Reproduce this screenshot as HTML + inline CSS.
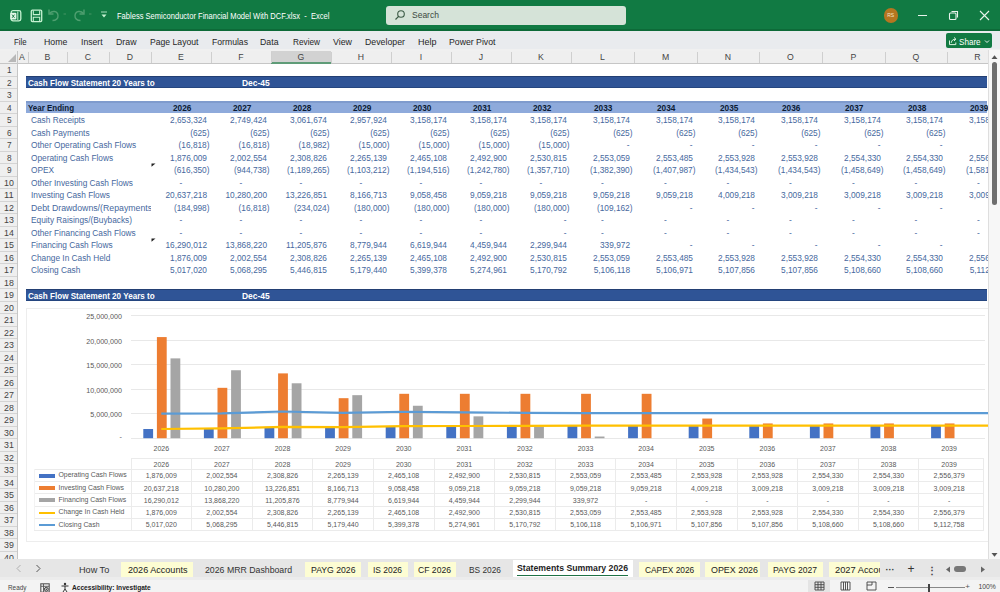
<!DOCTYPE html><html><head><meta charset="utf-8"><style>
html,body{margin:0;padding:0;width:1000px;height:592px;overflow:hidden;background:#fff;position:relative;font-family:"Liberation Sans",sans-serif}
.t{position:absolute;white-space:pre}.tc{text-align:center}.r{position:absolute}svg{position:absolute}
</style></head><body>
<div class="r" style="left:0.00px;top:0.00px;width:1000.00px;height:31.00px;background:#117a43;"></div>
<div class="r" style="left:0.00px;top:29.20px;width:1000.00px;height:1.60px;background:#0d6a38;"></div>
<svg style="left:9px;top:9px" width="14" height="14" viewBox="0 0 14 14"><rect x="2.2" y="1.6" width="9.6" height="10.2" rx="1.8" fill="none" stroke="#c6f2d2" stroke-width="1.3"/><line x1="8.8" y1="2.5" x2="8.8" y2="11" stroke="#c6f2d2" stroke-width="1"/><rect x="1.2" y="3.8" width="6.2" height="6.8" rx="1" fill="#e2f8e8"/><path d="M3.1 5.6 L5.5 8.8 M5.5 5.6 L3.1 8.8" stroke="#1b7a45" stroke-width="1"/></svg>
<svg style="left:30px;top:8.5px" width="13" height="14" viewBox="0 0 13 14"><rect x="1.3" y="1.2" width="10.4" height="11.4" rx="1" fill="none" stroke="#c6f2d2" stroke-width="1.3"/><path d="M3.3 1.5 V5.6 H9.7 V1.5" fill="none" stroke="#c6f2d2" stroke-width="1.1"/><path d="M3.3 12.3 V8.3 H9.7 V12.3" fill="none" stroke="#c6f2d2" stroke-width="1.1"/></svg>
<svg style="left:44px;top:4px" width="70" height="24" viewBox="0 0 70 24"><path d="M5 5.5 V10 H9.5" fill="none" stroke="#4f9f70" stroke-width="1.4"/><path d="M5.5 9.5 C8 6.5 13.5 6.5 14 11.5 C14.3 14.5 12 16.5 8.5 16.5" fill="none" stroke="#4f9f70" stroke-width="1.4"/><line x1="19.5" y1="10" x2="22" y2="10" stroke="#3f8f60" stroke-width="1.2"/><path d="M40 5.5 V10 H35.5" fill="none" stroke="#4f9f70" stroke-width="1.4"/><path d="M39.5 9.5 C37 6.5 31.5 6.5 31 11.5 C30.7 14.5 33 16.5 36.5 16.5" fill="none" stroke="#4f9f70" stroke-width="1.4"/><line x1="45" y1="10" x2="47.5" y2="10" stroke="#3f8f60" stroke-width="1.2"/><line x1="57" y1="8" x2="63" y2="8" stroke="#a8dcbc" stroke-width="1"/><path d="M57.5 10.5 H62.5 L60 13.5 Z" fill="#c6f2d2"/></svg>
<svg style="left:115.40px;top:7.20px;overflow:visible" width="216.40" height="17.60"><text x="2" y="11.70" font-family="Liberation Sans" font-size="8.8" font-weight="normal" fill="#fff" textLength="212.40" lengthAdjust="spacingAndGlyphs">Fabless Semiconductor Financial Model With DCF.xlsx &#160;-&#160; Excel</text></svg>
<div class="r" style="left:385.50px;top:5.50px;width:240.00px;height:19.50px;background:#d5e3d8;border-radius:3px"></div>
<svg style="left:394px;top:9px" width="12" height="12" viewBox="0 0 12 12"><circle cx="7" cy="5" r="3.3" fill="none" stroke="#3b5a45" stroke-width="1.1"/><line x1="4.6" y1="7.4" x2="1.5" y2="10.5" stroke="#3b5a45" stroke-width="1.2"/></svg>
<div class="t" style="left:412.00px;top:9.78px;font-size:8.5px;line-height:11.05px;color:#3b4a40;font-weight:normal;">Search</div>
<div class="r" style="left:883.5px;top:8px;width:14.5px;height:14.5px;border-radius:50%;background:#b57620"></div>
<div class="t tc" style="left:790.70px;width:200px;top:12.05px;font-size:5px;line-height:6.50px;color:#f5e6c8;font-weight:normal;">RS</div>
<div class="r" style="left:918.00px;top:14.50px;width:9.00px;height:1.20px;background:#e8f3ec;"></div>
<svg style="left:948px;top:10px" width="11" height="11" viewBox="0 0 11 11"><rect x="1.5" y="3" width="6.5" height="6.5" rx="1" fill="none" stroke="#e8f3ec" stroke-width="1.1"/><path d="M3.5 1.5 H9.5 V7.5" fill="none" stroke="#e8f3ec" stroke-width="1.1"/></svg>
<svg style="left:979px;top:10px" width="11" height="11" viewBox="0 0 11 11"><path d="M1 1 L10 10 M10 1 L1 10" stroke="#e8f3ec" stroke-width="1.1"/></svg>
<div class="r" style="left:0.00px;top:31.00px;width:1000.00px;height:18.00px;background:#e9ebee;"></div>
<svg style="left:11.80px;top:32.70px;overflow:visible" width="16.60" height="18.60"><text x="2" y="12.37" font-family="Liberation Sans" font-size="9.3" font-weight="normal" fill="#262626" textLength="12.60" lengthAdjust="spacingAndGlyphs">File</text></svg>
<svg style="left:42.40px;top:32.70px;overflow:visible" width="27.40" height="18.60"><text x="2" y="12.37" font-family="Liberation Sans" font-size="9.3" font-weight="normal" fill="#262626" textLength="23.40" lengthAdjust="spacingAndGlyphs">Home</text></svg>
<svg style="left:79.00px;top:32.70px;overflow:visible" width="25.60" height="18.60"><text x="2" y="12.37" font-family="Liberation Sans" font-size="9.3" font-weight="normal" fill="#262626" textLength="21.60" lengthAdjust="spacingAndGlyphs">Insert</text></svg>
<svg style="left:114.00px;top:32.70px;overflow:visible" width="24.50" height="18.60"><text x="2" y="12.37" font-family="Liberation Sans" font-size="9.3" font-weight="normal" fill="#262626" textLength="20.50" lengthAdjust="spacingAndGlyphs">Draw</text></svg>
<svg style="left:147.50px;top:32.70px;overflow:visible" width="52.50" height="18.60"><text x="2" y="12.37" font-family="Liberation Sans" font-size="9.3" font-weight="normal" fill="#262626" textLength="48.50" lengthAdjust="spacingAndGlyphs">Page Layout</text></svg>
<svg style="left:209.50px;top:32.70px;overflow:visible" width="40.00" height="18.60"><text x="2" y="12.37" font-family="Liberation Sans" font-size="9.3" font-weight="normal" fill="#262626" textLength="36.00" lengthAdjust="spacingAndGlyphs">Formulas</text></svg>
<svg style="left:258.00px;top:32.70px;overflow:visible" width="22.50" height="18.60"><text x="2" y="12.37" font-family="Liberation Sans" font-size="9.3" font-weight="normal" fill="#262626" textLength="18.50" lengthAdjust="spacingAndGlyphs">Data</text></svg>
<svg style="left:290.50px;top:32.70px;overflow:visible" width="31.00" height="18.60"><text x="2" y="12.37" font-family="Liberation Sans" font-size="9.3" font-weight="normal" fill="#262626" textLength="27.00" lengthAdjust="spacingAndGlyphs">Review</text></svg>
<svg style="left:331.00px;top:32.70px;overflow:visible" width="23.00" height="18.60"><text x="2" y="12.37" font-family="Liberation Sans" font-size="9.3" font-weight="normal" fill="#262626" textLength="19.00" lengthAdjust="spacingAndGlyphs">View</text></svg>
<svg style="left:363.00px;top:32.70px;overflow:visible" width="44.00" height="18.60"><text x="2" y="12.37" font-family="Liberation Sans" font-size="9.3" font-weight="normal" fill="#262626" textLength="40.00" lengthAdjust="spacingAndGlyphs">Developer</text></svg>
<svg style="left:415.50px;top:32.70px;overflow:visible" width="22.50" height="18.60"><text x="2" y="12.37" font-family="Liberation Sans" font-size="9.3" font-weight="normal" fill="#262626" textLength="18.50" lengthAdjust="spacingAndGlyphs">Help</text></svg>
<svg style="left:447.00px;top:32.70px;overflow:visible" width="50.50" height="18.60"><text x="2" y="12.37" font-family="Liberation Sans" font-size="9.3" font-weight="normal" fill="#262626" textLength="46.50" lengthAdjust="spacingAndGlyphs">Power Pivot</text></svg>
<div class="r" style="left:946.00px;top:33.30px;width:46.20px;height:15.00px;background:#117a43;border-radius:2px"></div>
<svg style="left:948px;top:36px" width="10" height="10" viewBox="0 0 10 10"><path d="M1.5 4.5 V8.6 H7.8 V6.5" fill="none" stroke="#d8f3e0" stroke-width="1"/><path d="M3.2 6.8 C3.6 4.2 5.2 3.2 7.6 3.2 M6 1.4 L7.9 3.2 L6 5" fill="none" stroke="#d8f3e0" stroke-width="1"/></svg>
<svg style="left:957.40px;top:32.50px;overflow:visible" width="25.60" height="18.00"><text x="2" y="11.97" font-family="Liberation Sans" font-size="9" font-weight="normal" fill="#fff" textLength="21.60" lengthAdjust="spacingAndGlyphs">Share</text></svg>
<svg style="left:984px;top:38.5px" width="6" height="5" viewBox="0 0 6 5"><path d="M1 1.5 L3 3.5 L5 1.5" fill="none" stroke="#fff" stroke-width="0.9"/></svg>
<div class="r" style="left:0.00px;top:49.00px;width:1000.00px;height:15.00px;background:#f0f0f0;"></div>
<div class="r" style="left:0.00px;top:50.50px;width:989.00px;height:13.00px;background:#efefef;"></div>
<div class="r" style="left:0.00px;top:63.00px;width:989.00px;height:1.00px;background:#c6c6c6;"></div>
<div class="r" style="left:271.00px;top:50.50px;width:60.00px;height:13.00px;background:#d2d2d2;"></div>
<div class="r" style="left:271.00px;top:62.00px;width:60.00px;height:1.50px;background:#5f9c78;"></div>
<svg style="left:8px;top:54px" width="8" height="8" viewBox="0 0 8 8"><path d="M8 0 L8 8 L0 8 Z" fill="#b8b8b8"/></svg>
<div class="r" style="left:27.50px;top:52.00px;width:1.00px;height:11.00px;background:#cfcfcf;"></div>
<div class="t tc" style="left:-78.00px;width:200px;top:51.95px;font-size:8.7px;line-height:11.31px;color:#444;font-weight:normal;">A</div>
<div class="r" style="left:66.50px;top:52.00px;width:1.00px;height:11.00px;background:#cfcfcf;"></div>
<div class="t tc" style="left:-52.50px;width:200px;top:51.95px;font-size:8.7px;line-height:11.31px;color:#444;font-weight:normal;">B</div>
<div class="r" style="left:108.50px;top:52.00px;width:1.00px;height:11.00px;background:#cfcfcf;"></div>
<div class="t tc" style="left:-12.00px;width:200px;top:51.95px;font-size:8.7px;line-height:11.31px;color:#444;font-weight:normal;">C</div>
<div class="r" style="left:150.50px;top:52.00px;width:1.00px;height:11.00px;background:#cfcfcf;"></div>
<div class="t tc" style="left:30.00px;width:200px;top:51.95px;font-size:8.7px;line-height:11.31px;color:#444;font-weight:normal;">D</div>
<div class="r" style="left:210.50px;top:52.00px;width:1.00px;height:11.00px;background:#cfcfcf;"></div>
<div class="t tc" style="left:81.00px;width:200px;top:51.95px;font-size:8.7px;line-height:11.31px;color:#444;font-weight:normal;">E</div>
<div class="r" style="left:270.50px;top:52.00px;width:1.00px;height:11.00px;background:#cfcfcf;"></div>
<div class="t tc" style="left:141.00px;width:200px;top:51.95px;font-size:8.7px;line-height:11.31px;color:#444;font-weight:normal;">F</div>
<div class="r" style="left:330.50px;top:52.00px;width:1.00px;height:11.00px;background:#cfcfcf;"></div>
<div class="t tc" style="left:201.00px;width:200px;top:51.95px;font-size:8.7px;line-height:11.31px;color:#444;font-weight:normal;">G</div>
<div class="r" style="left:390.50px;top:52.00px;width:1.00px;height:11.00px;background:#cfcfcf;"></div>
<div class="t tc" style="left:261.00px;width:200px;top:51.95px;font-size:8.7px;line-height:11.31px;color:#444;font-weight:normal;">H</div>
<div class="r" style="left:450.50px;top:52.00px;width:1.00px;height:11.00px;background:#cfcfcf;"></div>
<div class="t tc" style="left:321.00px;width:200px;top:51.95px;font-size:8.7px;line-height:11.31px;color:#444;font-weight:normal;">I</div>
<div class="r" style="left:510.50px;top:52.00px;width:1.00px;height:11.00px;background:#cfcfcf;"></div>
<div class="t tc" style="left:381.00px;width:200px;top:51.95px;font-size:8.7px;line-height:11.31px;color:#444;font-weight:normal;">J</div>
<div class="r" style="left:570.50px;top:52.00px;width:1.00px;height:11.00px;background:#cfcfcf;"></div>
<div class="t tc" style="left:441.00px;width:200px;top:51.95px;font-size:8.7px;line-height:11.31px;color:#444;font-weight:normal;">K</div>
<div class="r" style="left:633.50px;top:52.00px;width:1.00px;height:11.00px;background:#cfcfcf;"></div>
<div class="t tc" style="left:502.50px;width:200px;top:51.95px;font-size:8.7px;line-height:11.31px;color:#444;font-weight:normal;">L</div>
<div class="r" style="left:696.50px;top:52.00px;width:1.00px;height:11.00px;background:#cfcfcf;"></div>
<div class="t tc" style="left:565.50px;width:200px;top:51.95px;font-size:8.7px;line-height:11.31px;color:#444;font-weight:normal;">M</div>
<div class="r" style="left:758.50px;top:52.00px;width:1.00px;height:11.00px;background:#cfcfcf;"></div>
<div class="t tc" style="left:628.00px;width:200px;top:51.95px;font-size:8.7px;line-height:11.31px;color:#444;font-weight:normal;">N</div>
<div class="r" style="left:821.50px;top:52.00px;width:1.00px;height:11.00px;background:#cfcfcf;"></div>
<div class="t tc" style="left:690.50px;width:200px;top:51.95px;font-size:8.7px;line-height:11.31px;color:#444;font-weight:normal;">O</div>
<div class="r" style="left:884.50px;top:52.00px;width:1.00px;height:11.00px;background:#cfcfcf;"></div>
<div class="t tc" style="left:753.50px;width:200px;top:51.95px;font-size:8.7px;line-height:11.31px;color:#444;font-weight:normal;">P</div>
<div class="r" style="left:946.50px;top:52.00px;width:1.00px;height:11.00px;background:#cfcfcf;"></div>
<div class="t tc" style="left:816.00px;width:200px;top:51.95px;font-size:8.7px;line-height:11.31px;color:#444;font-weight:normal;">Q</div>
<div class="r" style="left:1009.50px;top:52.00px;width:1.00px;height:11.00px;background:#cfcfcf;"></div>
<div class="t tc" style="left:877.50px;width:200px;top:51.95px;font-size:8.7px;line-height:11.31px;color:#444;font-weight:normal;">R</div>
<div class="r" style="left:17.00px;top:50.50px;width:1.00px;height:13.00px;background:#c6c6c6;"></div>
<div class="r" style="left:0.00px;top:63.50px;width:17.00px;height:496.00px;background:#efefef;"></div>
<div class="r" style="left:17.00px;top:63.50px;width:1.00px;height:496.00px;background:#c6c6c6;"></div>
<div class="r" style="left:0.00px;top:75.50px;width:17.00px;height:1.00px;background:#d4d4d4;"></div>
<svg style="left:4.70px;top:60.45px;overflow:visible" width="8.60" height="19.20"><text x="2" y="12.77" font-family="Liberation Sans" font-size="9.6" font-weight="normal" fill="#444" textLength="4.60" lengthAdjust="spacingAndGlyphs">1</text></svg>
<div class="r" style="left:0.00px;top:88.00px;width:17.00px;height:1.00px;background:#d4d4d4;"></div>
<svg style="left:4.70px;top:72.95px;overflow:visible" width="8.60" height="19.20"><text x="2" y="12.77" font-family="Liberation Sans" font-size="9.6" font-weight="normal" fill="#444" textLength="4.60" lengthAdjust="spacingAndGlyphs">2</text></svg>
<div class="r" style="left:0.00px;top:100.50px;width:17.00px;height:1.00px;background:#d4d4d4;"></div>
<svg style="left:4.70px;top:85.45px;overflow:visible" width="8.60" height="19.20"><text x="2" y="12.77" font-family="Liberation Sans" font-size="9.6" font-weight="normal" fill="#444" textLength="4.60" lengthAdjust="spacingAndGlyphs">3</text></svg>
<div class="r" style="left:0.00px;top:113.00px;width:17.00px;height:1.00px;background:#d4d4d4;"></div>
<svg style="left:4.70px;top:97.95px;overflow:visible" width="8.60" height="19.20"><text x="2" y="12.77" font-family="Liberation Sans" font-size="9.6" font-weight="normal" fill="#444" textLength="4.60" lengthAdjust="spacingAndGlyphs">4</text></svg>
<div class="r" style="left:0.00px;top:125.50px;width:17.00px;height:1.00px;background:#d4d4d4;"></div>
<svg style="left:4.70px;top:110.45px;overflow:visible" width="8.60" height="19.20"><text x="2" y="12.77" font-family="Liberation Sans" font-size="9.6" font-weight="normal" fill="#444" textLength="4.60" lengthAdjust="spacingAndGlyphs">5</text></svg>
<div class="r" style="left:0.00px;top:138.00px;width:17.00px;height:1.00px;background:#d4d4d4;"></div>
<svg style="left:4.70px;top:122.95px;overflow:visible" width="8.60" height="19.20"><text x="2" y="12.77" font-family="Liberation Sans" font-size="9.6" font-weight="normal" fill="#444" textLength="4.60" lengthAdjust="spacingAndGlyphs">6</text></svg>
<div class="r" style="left:0.00px;top:150.50px;width:17.00px;height:1.00px;background:#d4d4d4;"></div>
<svg style="left:4.70px;top:135.45px;overflow:visible" width="8.60" height="19.20"><text x="2" y="12.77" font-family="Liberation Sans" font-size="9.6" font-weight="normal" fill="#444" textLength="4.60" lengthAdjust="spacingAndGlyphs">7</text></svg>
<div class="r" style="left:0.00px;top:163.00px;width:17.00px;height:1.00px;background:#d4d4d4;"></div>
<svg style="left:4.70px;top:147.95px;overflow:visible" width="8.60" height="19.20"><text x="2" y="12.77" font-family="Liberation Sans" font-size="9.6" font-weight="normal" fill="#444" textLength="4.60" lengthAdjust="spacingAndGlyphs">8</text></svg>
<div class="r" style="left:0.00px;top:175.50px;width:17.00px;height:1.00px;background:#d4d4d4;"></div>
<svg style="left:4.70px;top:160.45px;overflow:visible" width="8.60" height="19.20"><text x="2" y="12.77" font-family="Liberation Sans" font-size="9.6" font-weight="normal" fill="#444" textLength="4.60" lengthAdjust="spacingAndGlyphs">9</text></svg>
<div class="r" style="left:0.00px;top:188.00px;width:17.00px;height:1.00px;background:#d4d4d4;"></div>
<svg style="left:2.10px;top:172.95px;overflow:visible" width="13.80" height="19.20"><text x="2" y="12.77" font-family="Liberation Sans" font-size="9.6" font-weight="normal" fill="#444" textLength="9.80" lengthAdjust="spacingAndGlyphs">10</text></svg>
<div class="r" style="left:0.00px;top:200.50px;width:17.00px;height:1.00px;background:#d4d4d4;"></div>
<svg style="left:2.10px;top:185.45px;overflow:visible" width="13.80" height="19.20"><text x="2" y="12.77" font-family="Liberation Sans" font-size="9.6" font-weight="normal" fill="#444" textLength="9.80" lengthAdjust="spacingAndGlyphs">11</text></svg>
<div class="r" style="left:0.00px;top:213.00px;width:17.00px;height:1.00px;background:#d4d4d4;"></div>
<svg style="left:2.10px;top:197.95px;overflow:visible" width="13.80" height="19.20"><text x="2" y="12.77" font-family="Liberation Sans" font-size="9.6" font-weight="normal" fill="#444" textLength="9.80" lengthAdjust="spacingAndGlyphs">12</text></svg>
<div class="r" style="left:0.00px;top:225.50px;width:17.00px;height:1.00px;background:#d4d4d4;"></div>
<svg style="left:2.10px;top:210.45px;overflow:visible" width="13.80" height="19.20"><text x="2" y="12.77" font-family="Liberation Sans" font-size="9.6" font-weight="normal" fill="#444" textLength="9.80" lengthAdjust="spacingAndGlyphs">13</text></svg>
<div class="r" style="left:0.00px;top:238.00px;width:17.00px;height:1.00px;background:#d4d4d4;"></div>
<svg style="left:2.10px;top:222.95px;overflow:visible" width="13.80" height="19.20"><text x="2" y="12.77" font-family="Liberation Sans" font-size="9.6" font-weight="normal" fill="#444" textLength="9.80" lengthAdjust="spacingAndGlyphs">14</text></svg>
<div class="r" style="left:0.00px;top:250.50px;width:17.00px;height:1.00px;background:#d4d4d4;"></div>
<svg style="left:2.10px;top:235.45px;overflow:visible" width="13.80" height="19.20"><text x="2" y="12.77" font-family="Liberation Sans" font-size="9.6" font-weight="normal" fill="#444" textLength="9.80" lengthAdjust="spacingAndGlyphs">15</text></svg>
<div class="r" style="left:0.00px;top:263.00px;width:17.00px;height:1.00px;background:#d4d4d4;"></div>
<svg style="left:2.10px;top:247.95px;overflow:visible" width="13.80" height="19.20"><text x="2" y="12.77" font-family="Liberation Sans" font-size="9.6" font-weight="normal" fill="#444" textLength="9.80" lengthAdjust="spacingAndGlyphs">16</text></svg>
<div class="r" style="left:0.00px;top:275.50px;width:17.00px;height:1.00px;background:#d4d4d4;"></div>
<svg style="left:2.10px;top:260.45px;overflow:visible" width="13.80" height="19.20"><text x="2" y="12.77" font-family="Liberation Sans" font-size="9.6" font-weight="normal" fill="#444" textLength="9.80" lengthAdjust="spacingAndGlyphs">17</text></svg>
<div class="r" style="left:0.00px;top:288.00px;width:17.00px;height:1.00px;background:#d4d4d4;"></div>
<svg style="left:2.10px;top:272.95px;overflow:visible" width="13.80" height="19.20"><text x="2" y="12.77" font-family="Liberation Sans" font-size="9.6" font-weight="normal" fill="#444" textLength="9.80" lengthAdjust="spacingAndGlyphs">18</text></svg>
<div class="r" style="left:0.00px;top:300.50px;width:17.00px;height:1.00px;background:#d4d4d4;"></div>
<svg style="left:2.10px;top:285.45px;overflow:visible" width="13.80" height="19.20"><text x="2" y="12.77" font-family="Liberation Sans" font-size="9.6" font-weight="normal" fill="#444" textLength="9.80" lengthAdjust="spacingAndGlyphs">19</text></svg>
<div class="r" style="left:0.00px;top:313.00px;width:17.00px;height:1.00px;background:#d4d4d4;"></div>
<svg style="left:2.10px;top:297.95px;overflow:visible" width="13.80" height="19.20"><text x="2" y="12.77" font-family="Liberation Sans" font-size="9.6" font-weight="normal" fill="#444" textLength="9.80" lengthAdjust="spacingAndGlyphs">20</text></svg>
<div class="r" style="left:0.00px;top:325.50px;width:17.00px;height:1.00px;background:#d4d4d4;"></div>
<svg style="left:2.10px;top:310.45px;overflow:visible" width="13.80" height="19.20"><text x="2" y="12.77" font-family="Liberation Sans" font-size="9.6" font-weight="normal" fill="#444" textLength="9.80" lengthAdjust="spacingAndGlyphs">21</text></svg>
<div class="r" style="left:0.00px;top:338.00px;width:17.00px;height:1.00px;background:#d4d4d4;"></div>
<svg style="left:2.10px;top:322.95px;overflow:visible" width="13.80" height="19.20"><text x="2" y="12.77" font-family="Liberation Sans" font-size="9.6" font-weight="normal" fill="#444" textLength="9.80" lengthAdjust="spacingAndGlyphs">22</text></svg>
<div class="r" style="left:0.00px;top:350.50px;width:17.00px;height:1.00px;background:#d4d4d4;"></div>
<svg style="left:2.10px;top:335.45px;overflow:visible" width="13.80" height="19.20"><text x="2" y="12.77" font-family="Liberation Sans" font-size="9.6" font-weight="normal" fill="#444" textLength="9.80" lengthAdjust="spacingAndGlyphs">23</text></svg>
<div class="r" style="left:0.00px;top:363.00px;width:17.00px;height:1.00px;background:#d4d4d4;"></div>
<svg style="left:2.10px;top:347.95px;overflow:visible" width="13.80" height="19.20"><text x="2" y="12.77" font-family="Liberation Sans" font-size="9.6" font-weight="normal" fill="#444" textLength="9.80" lengthAdjust="spacingAndGlyphs">24</text></svg>
<div class="r" style="left:0.00px;top:375.50px;width:17.00px;height:1.00px;background:#d4d4d4;"></div>
<svg style="left:2.10px;top:360.45px;overflow:visible" width="13.80" height="19.20"><text x="2" y="12.77" font-family="Liberation Sans" font-size="9.6" font-weight="normal" fill="#444" textLength="9.80" lengthAdjust="spacingAndGlyphs">25</text></svg>
<div class="r" style="left:0.00px;top:388.00px;width:17.00px;height:1.00px;background:#d4d4d4;"></div>
<svg style="left:2.10px;top:372.95px;overflow:visible" width="13.80" height="19.20"><text x="2" y="12.77" font-family="Liberation Sans" font-size="9.6" font-weight="normal" fill="#444" textLength="9.80" lengthAdjust="spacingAndGlyphs">26</text></svg>
<div class="r" style="left:0.00px;top:400.50px;width:17.00px;height:1.00px;background:#d4d4d4;"></div>
<svg style="left:2.10px;top:385.45px;overflow:visible" width="13.80" height="19.20"><text x="2" y="12.77" font-family="Liberation Sans" font-size="9.6" font-weight="normal" fill="#444" textLength="9.80" lengthAdjust="spacingAndGlyphs">27</text></svg>
<div class="r" style="left:0.00px;top:413.00px;width:17.00px;height:1.00px;background:#d4d4d4;"></div>
<svg style="left:2.10px;top:397.95px;overflow:visible" width="13.80" height="19.20"><text x="2" y="12.77" font-family="Liberation Sans" font-size="9.6" font-weight="normal" fill="#444" textLength="9.80" lengthAdjust="spacingAndGlyphs">28</text></svg>
<div class="r" style="left:0.00px;top:425.50px;width:17.00px;height:1.00px;background:#d4d4d4;"></div>
<svg style="left:2.10px;top:410.45px;overflow:visible" width="13.80" height="19.20"><text x="2" y="12.77" font-family="Liberation Sans" font-size="9.6" font-weight="normal" fill="#444" textLength="9.80" lengthAdjust="spacingAndGlyphs">29</text></svg>
<div class="r" style="left:0.00px;top:438.00px;width:17.00px;height:1.00px;background:#d4d4d4;"></div>
<svg style="left:2.10px;top:422.95px;overflow:visible" width="13.80" height="19.20"><text x="2" y="12.77" font-family="Liberation Sans" font-size="9.6" font-weight="normal" fill="#444" textLength="9.80" lengthAdjust="spacingAndGlyphs">30</text></svg>
<div class="r" style="left:0.00px;top:450.50px;width:17.00px;height:1.00px;background:#d4d4d4;"></div>
<svg style="left:2.10px;top:435.45px;overflow:visible" width="13.80" height="19.20"><text x="2" y="12.77" font-family="Liberation Sans" font-size="9.6" font-weight="normal" fill="#444" textLength="9.80" lengthAdjust="spacingAndGlyphs">31</text></svg>
<div class="r" style="left:0.00px;top:463.00px;width:17.00px;height:1.00px;background:#d4d4d4;"></div>
<svg style="left:2.10px;top:447.95px;overflow:visible" width="13.80" height="19.20"><text x="2" y="12.77" font-family="Liberation Sans" font-size="9.6" font-weight="normal" fill="#444" textLength="9.80" lengthAdjust="spacingAndGlyphs">32</text></svg>
<div class="r" style="left:0.00px;top:475.50px;width:17.00px;height:1.00px;background:#d4d4d4;"></div>
<svg style="left:2.10px;top:460.45px;overflow:visible" width="13.80" height="19.20"><text x="2" y="12.77" font-family="Liberation Sans" font-size="9.6" font-weight="normal" fill="#444" textLength="9.80" lengthAdjust="spacingAndGlyphs">33</text></svg>
<div class="r" style="left:0.00px;top:488.00px;width:17.00px;height:1.00px;background:#d4d4d4;"></div>
<svg style="left:2.10px;top:472.95px;overflow:visible" width="13.80" height="19.20"><text x="2" y="12.77" font-family="Liberation Sans" font-size="9.6" font-weight="normal" fill="#444" textLength="9.80" lengthAdjust="spacingAndGlyphs">34</text></svg>
<div class="r" style="left:0.00px;top:500.50px;width:17.00px;height:1.00px;background:#d4d4d4;"></div>
<svg style="left:2.10px;top:485.45px;overflow:visible" width="13.80" height="19.20"><text x="2" y="12.77" font-family="Liberation Sans" font-size="9.6" font-weight="normal" fill="#444" textLength="9.80" lengthAdjust="spacingAndGlyphs">35</text></svg>
<div class="r" style="left:0.00px;top:513.00px;width:17.00px;height:1.00px;background:#d4d4d4;"></div>
<svg style="left:2.10px;top:497.95px;overflow:visible" width="13.80" height="19.20"><text x="2" y="12.77" font-family="Liberation Sans" font-size="9.6" font-weight="normal" fill="#444" textLength="9.80" lengthAdjust="spacingAndGlyphs">36</text></svg>
<div class="r" style="left:0.00px;top:525.50px;width:17.00px;height:1.00px;background:#d4d4d4;"></div>
<svg style="left:2.10px;top:510.45px;overflow:visible" width="13.80" height="19.20"><text x="2" y="12.77" font-family="Liberation Sans" font-size="9.6" font-weight="normal" fill="#444" textLength="9.80" lengthAdjust="spacingAndGlyphs">37</text></svg>
<div class="r" style="left:0.00px;top:538.00px;width:17.00px;height:1.00px;background:#d4d4d4;"></div>
<svg style="left:2.10px;top:522.95px;overflow:visible" width="13.80" height="19.20"><text x="2" y="12.77" font-family="Liberation Sans" font-size="9.6" font-weight="normal" fill="#444" textLength="9.80" lengthAdjust="spacingAndGlyphs">38</text></svg>
<div class="r" style="left:0.00px;top:550.50px;width:17.00px;height:1.00px;background:#d4d4d4;"></div>
<svg style="left:2.10px;top:535.45px;overflow:visible" width="13.80" height="19.20"><text x="2" y="12.77" font-family="Liberation Sans" font-size="9.6" font-weight="normal" fill="#444" textLength="9.80" lengthAdjust="spacingAndGlyphs">39</text></svg>
<div class="r" style="left:0.00px;top:563.00px;width:17.00px;height:1.00px;background:#d4d4d4;"></div>
<svg style="left:2.10px;top:547.95px;overflow:visible" width="13.80" height="19.20"><text x="2" y="12.77" font-family="Liberation Sans" font-size="9.6" font-weight="normal" fill="#444" textLength="9.80" lengthAdjust="spacingAndGlyphs">40</text></svg>
<div class="r" style="left:26.00px;top:76.10px;width:961.00px;height:12.20px;background:#2f5496;"></div>
<div class="r" style="left:26.00px;top:76.10px;width:961.00px;height:1.40px;background:#233f73;"></div>
<div class="r" style="left:26.00px;top:87.30px;width:961.00px;height:1.00px;background:#25467f;"></div>
<svg style="left:26.30px;top:74.45px;overflow:visible" width="130.70" height="17.40"><text x="2" y="11.57" font-family="Liberation Sans" font-size="8.7" font-weight="bold" fill="#fff" textLength="126.70" lengthAdjust="spacingAndGlyphs">Cash Flow Statement 20 Years to</text></svg>
<svg style="left:239.80px;top:74.45px;overflow:visible" width="31.70" height="17.40"><text x="2" y="11.57" font-family="Liberation Sans" font-size="8.7" font-weight="bold" fill="#fff" textLength="27.70" lengthAdjust="spacingAndGlyphs">Dec-45</text></svg>
<div class="r" style="left:26.00px;top:288.60px;width:961.00px;height:12.20px;background:#2f5496;"></div>
<div class="r" style="left:26.00px;top:288.60px;width:961.00px;height:1.40px;background:#233f73;"></div>
<div class="r" style="left:26.00px;top:299.80px;width:961.00px;height:1.00px;background:#25467f;"></div>
<svg style="left:26.30px;top:286.95px;overflow:visible" width="130.70" height="17.40"><text x="2" y="11.57" font-family="Liberation Sans" font-size="8.7" font-weight="bold" fill="#fff" textLength="126.70" lengthAdjust="spacingAndGlyphs">Cash Flow Statement 20 Years to</text></svg>
<svg style="left:239.80px;top:286.95px;overflow:visible" width="31.70" height="17.40"><text x="2" y="11.57" font-family="Liberation Sans" font-size="8.7" font-weight="bold" fill="#fff" textLength="27.70" lengthAdjust="spacingAndGlyphs">Dec-45</text></svg>
<div class="r" style="left:26.00px;top:100.60px;width:961.00px;height:12.50px;background:#8eaadb;"></div>
<div class="r" style="left:26.00px;top:100.60px;width:961.00px;height:2.00px;background:#7f9bcd;"></div>
<svg style="left:26.00px;top:98.95px;overflow:visible" width="50.00" height="17.40"><text x="2" y="11.57" font-family="Liberation Sans" font-size="8.7" font-weight="bold" fill="#0b1a33" textLength="46.00" lengthAdjust="spacingAndGlyphs">Year Ending</text></svg>
<svg style="left:170.80px;top:98.95px;overflow:visible" width="22.40" height="17.40"><text x="2" y="11.57" font-family="Liberation Sans" font-size="8.7" font-weight="bold" fill="#0b1a33" textLength="18.40" lengthAdjust="spacingAndGlyphs">2026</text></svg>
<svg style="left:230.80px;top:98.95px;overflow:visible" width="22.40" height="17.40"><text x="2" y="11.57" font-family="Liberation Sans" font-size="8.7" font-weight="bold" fill="#0b1a33" textLength="18.40" lengthAdjust="spacingAndGlyphs">2027</text></svg>
<svg style="left:290.80px;top:98.95px;overflow:visible" width="22.40" height="17.40"><text x="2" y="11.57" font-family="Liberation Sans" font-size="8.7" font-weight="bold" fill="#0b1a33" textLength="18.40" lengthAdjust="spacingAndGlyphs">2028</text></svg>
<svg style="left:350.80px;top:98.95px;overflow:visible" width="22.40" height="17.40"><text x="2" y="11.57" font-family="Liberation Sans" font-size="8.7" font-weight="bold" fill="#0b1a33" textLength="18.40" lengthAdjust="spacingAndGlyphs">2029</text></svg>
<svg style="left:410.80px;top:98.95px;overflow:visible" width="22.40" height="17.40"><text x="2" y="11.57" font-family="Liberation Sans" font-size="8.7" font-weight="bold" fill="#0b1a33" textLength="18.40" lengthAdjust="spacingAndGlyphs">2030</text></svg>
<svg style="left:470.80px;top:98.95px;overflow:visible" width="22.40" height="17.40"><text x="2" y="11.57" font-family="Liberation Sans" font-size="8.7" font-weight="bold" fill="#0b1a33" textLength="18.40" lengthAdjust="spacingAndGlyphs">2031</text></svg>
<svg style="left:530.80px;top:98.95px;overflow:visible" width="22.40" height="17.40"><text x="2" y="11.57" font-family="Liberation Sans" font-size="8.7" font-weight="bold" fill="#0b1a33" textLength="18.40" lengthAdjust="spacingAndGlyphs">2032</text></svg>
<svg style="left:592.30px;top:98.95px;overflow:visible" width="22.40" height="17.40"><text x="2" y="11.57" font-family="Liberation Sans" font-size="8.7" font-weight="bold" fill="#0b1a33" textLength="18.40" lengthAdjust="spacingAndGlyphs">2033</text></svg>
<svg style="left:655.30px;top:98.95px;overflow:visible" width="22.40" height="17.40"><text x="2" y="11.57" font-family="Liberation Sans" font-size="8.7" font-weight="bold" fill="#0b1a33" textLength="18.40" lengthAdjust="spacingAndGlyphs">2034</text></svg>
<svg style="left:717.80px;top:98.95px;overflow:visible" width="22.40" height="17.40"><text x="2" y="11.57" font-family="Liberation Sans" font-size="8.7" font-weight="bold" fill="#0b1a33" textLength="18.40" lengthAdjust="spacingAndGlyphs">2035</text></svg>
<svg style="left:780.30px;top:98.95px;overflow:visible" width="22.40" height="17.40"><text x="2" y="11.57" font-family="Liberation Sans" font-size="8.7" font-weight="bold" fill="#0b1a33" textLength="18.40" lengthAdjust="spacingAndGlyphs">2036</text></svg>
<svg style="left:843.30px;top:98.95px;overflow:visible" width="22.40" height="17.40"><text x="2" y="11.57" font-family="Liberation Sans" font-size="8.7" font-weight="bold" fill="#0b1a33" textLength="18.40" lengthAdjust="spacingAndGlyphs">2037</text></svg>
<svg style="left:905.80px;top:98.95px;overflow:visible" width="22.40" height="17.40"><text x="2" y="11.57" font-family="Liberation Sans" font-size="8.7" font-weight="bold" fill="#0b1a33" textLength="18.40" lengthAdjust="spacingAndGlyphs">2038</text></svg>
<svg style="left:968.30px;top:98.95px;overflow:visible" width="22.40" height="17.40"><text x="2" y="11.57" font-family="Liberation Sans" font-size="8.7" font-weight="bold" fill="#0b1a33" textLength="18.40" lengthAdjust="spacingAndGlyphs">2039</text></svg>
<div style="position:absolute;left:0;top:0;width:1000px;height:592px;clip-path:inset(0 11px 0 0)">
<div class="t" style="left:31.00px;top:115.16px;font-size:8.3px;line-height:10.79px;color:#46689e;font-weight:normal;">Cash Receipts</div>
<div class="t" style="right:793.00px;top:115.16px;font-size:8.3px;line-height:10.79px;color:#46689e;font-weight:normal;transform:scaleY(1.12)">2,653,324</div>
<div class="t" style="right:733.00px;top:115.16px;font-size:8.3px;line-height:10.79px;color:#46689e;font-weight:normal;transform:scaleY(1.12)">2,749,424</div>
<div class="t" style="right:673.00px;top:115.16px;font-size:8.3px;line-height:10.79px;color:#46689e;font-weight:normal;transform:scaleY(1.12)">3,061,674</div>
<div class="t" style="right:613.00px;top:115.16px;font-size:8.3px;line-height:10.79px;color:#46689e;font-weight:normal;transform:scaleY(1.12)">2,957,924</div>
<div class="t" style="right:553.00px;top:115.16px;font-size:8.3px;line-height:10.79px;color:#46689e;font-weight:normal;transform:scaleY(1.12)">3,158,174</div>
<div class="t" style="right:493.00px;top:115.16px;font-size:8.3px;line-height:10.79px;color:#46689e;font-weight:normal;transform:scaleY(1.12)">3,158,174</div>
<div class="t" style="right:433.00px;top:115.16px;font-size:8.3px;line-height:10.79px;color:#46689e;font-weight:normal;transform:scaleY(1.12)">3,158,174</div>
<div class="t" style="right:370.00px;top:115.16px;font-size:8.3px;line-height:10.79px;color:#46689e;font-weight:normal;transform:scaleY(1.12)">3,158,174</div>
<div class="t" style="right:307.00px;top:115.16px;font-size:8.3px;line-height:10.79px;color:#46689e;font-weight:normal;transform:scaleY(1.12)">3,158,174</div>
<div class="t" style="right:245.00px;top:115.16px;font-size:8.3px;line-height:10.79px;color:#46689e;font-weight:normal;transform:scaleY(1.12)">3,158,174</div>
<div class="t" style="right:182.00px;top:115.16px;font-size:8.3px;line-height:10.79px;color:#46689e;font-weight:normal;transform:scaleY(1.12)">3,158,174</div>
<div class="t" style="right:119.00px;top:115.16px;font-size:8.3px;line-height:10.79px;color:#46689e;font-weight:normal;transform:scaleY(1.12)">3,158,174</div>
<div class="t" style="right:57.00px;top:115.16px;font-size:8.3px;line-height:10.79px;color:#46689e;font-weight:normal;transform:scaleY(1.12)">3,158,174</div>
<div class="t" style="right:-6.00px;top:115.16px;font-size:8.3px;line-height:10.79px;color:#46689e;font-weight:normal;transform:scaleY(1.12)">3,158,174</div>
<div class="t" style="left:31.00px;top:127.66px;font-size:8.3px;line-height:10.79px;color:#46689e;font-weight:normal;">Cash Payments</div>
<div class="t" style="right:790.50px;top:127.66px;font-size:8.3px;line-height:10.79px;color:#46689e;font-weight:normal;transform:scaleY(1.12)">(625)</div>
<div class="t" style="right:730.50px;top:127.66px;font-size:8.3px;line-height:10.79px;color:#46689e;font-weight:normal;transform:scaleY(1.12)">(625)</div>
<div class="t" style="right:670.50px;top:127.66px;font-size:8.3px;line-height:10.79px;color:#46689e;font-weight:normal;transform:scaleY(1.12)">(625)</div>
<div class="t" style="right:610.50px;top:127.66px;font-size:8.3px;line-height:10.79px;color:#46689e;font-weight:normal;transform:scaleY(1.12)">(625)</div>
<div class="t" style="right:550.50px;top:127.66px;font-size:8.3px;line-height:10.79px;color:#46689e;font-weight:normal;transform:scaleY(1.12)">(625)</div>
<div class="t" style="right:490.50px;top:127.66px;font-size:8.3px;line-height:10.79px;color:#46689e;font-weight:normal;transform:scaleY(1.12)">(625)</div>
<div class="t" style="right:430.50px;top:127.66px;font-size:8.3px;line-height:10.79px;color:#46689e;font-weight:normal;transform:scaleY(1.12)">(625)</div>
<div class="t" style="right:367.50px;top:127.66px;font-size:8.3px;line-height:10.79px;color:#46689e;font-weight:normal;transform:scaleY(1.12)">(625)</div>
<div class="t" style="right:304.50px;top:127.66px;font-size:8.3px;line-height:10.79px;color:#46689e;font-weight:normal;transform:scaleY(1.12)">(625)</div>
<div class="t" style="right:242.50px;top:127.66px;font-size:8.3px;line-height:10.79px;color:#46689e;font-weight:normal;transform:scaleY(1.12)">(625)</div>
<div class="t" style="right:179.50px;top:127.66px;font-size:8.3px;line-height:10.79px;color:#46689e;font-weight:normal;transform:scaleY(1.12)">(625)</div>
<div class="t" style="right:116.50px;top:127.66px;font-size:8.3px;line-height:10.79px;color:#46689e;font-weight:normal;transform:scaleY(1.12)">(625)</div>
<div class="t" style="right:54.50px;top:127.66px;font-size:8.3px;line-height:10.79px;color:#46689e;font-weight:normal;transform:scaleY(1.12)">(625)</div>
<div class="t" style="right:-8.50px;top:127.66px;font-size:8.3px;line-height:10.79px;color:#46689e;font-weight:normal;transform:scaleY(1.12)">(625)</div>
<div class="t" style="left:31.00px;top:140.16px;font-size:8.3px;line-height:10.79px;color:#46689e;font-weight:normal;">Other Operating Cash Flows</div>
<div class="t" style="right:790.50px;top:140.16px;font-size:8.3px;line-height:10.79px;color:#46689e;font-weight:normal;transform:scaleY(1.12)">(16,818)</div>
<div class="t" style="right:730.50px;top:140.16px;font-size:8.3px;line-height:10.79px;color:#46689e;font-weight:normal;transform:scaleY(1.12)">(16,818)</div>
<div class="t" style="right:670.50px;top:140.16px;font-size:8.3px;line-height:10.79px;color:#46689e;font-weight:normal;transform:scaleY(1.12)">(18,982)</div>
<div class="t" style="right:610.50px;top:140.16px;font-size:8.3px;line-height:10.79px;color:#46689e;font-weight:normal;transform:scaleY(1.12)">(15,000)</div>
<div class="t" style="right:550.50px;top:140.16px;font-size:8.3px;line-height:10.79px;color:#46689e;font-weight:normal;transform:scaleY(1.12)">(15,000)</div>
<div class="t" style="right:490.50px;top:140.16px;font-size:8.3px;line-height:10.79px;color:#46689e;font-weight:normal;transform:scaleY(1.12)">(15,000)</div>
<div class="t" style="right:430.50px;top:140.16px;font-size:8.3px;line-height:10.79px;color:#46689e;font-weight:normal;transform:scaleY(1.12)">(15,000)</div>
<div class="t" style="right:370.50px;top:140.16px;font-size:8.3px;line-height:10.79px;color:#46689e;font-weight:normal;transform:scaleY(1.12)">-</div>
<div class="t" style="right:307.50px;top:140.16px;font-size:8.3px;line-height:10.79px;color:#46689e;font-weight:normal;transform:scaleY(1.12)">-</div>
<div class="t" style="right:245.50px;top:140.16px;font-size:8.3px;line-height:10.79px;color:#46689e;font-weight:normal;transform:scaleY(1.12)">-</div>
<div class="t" style="right:182.50px;top:140.16px;font-size:8.3px;line-height:10.79px;color:#46689e;font-weight:normal;transform:scaleY(1.12)">-</div>
<div class="t" style="right:119.50px;top:140.16px;font-size:8.3px;line-height:10.79px;color:#46689e;font-weight:normal;transform:scaleY(1.12)">-</div>
<div class="t" style="right:57.50px;top:140.16px;font-size:8.3px;line-height:10.79px;color:#46689e;font-weight:normal;transform:scaleY(1.12)">-</div>
<div class="t" style="right:-5.50px;top:140.16px;font-size:8.3px;line-height:10.79px;color:#46689e;font-weight:normal;transform:scaleY(1.12)">-</div>
<div class="t" style="left:31.00px;top:152.66px;font-size:8.3px;line-height:10.79px;color:#46689e;font-weight:normal;">Operating Cash Flows</div>
<div class="t" style="right:793.00px;top:152.66px;font-size:8.3px;line-height:10.79px;color:#46689e;font-weight:normal;transform:scaleY(1.12)">1,876,009</div>
<div class="t" style="right:733.00px;top:152.66px;font-size:8.3px;line-height:10.79px;color:#46689e;font-weight:normal;transform:scaleY(1.12)">2,002,554</div>
<div class="t" style="right:673.00px;top:152.66px;font-size:8.3px;line-height:10.79px;color:#46689e;font-weight:normal;transform:scaleY(1.12)">2,308,826</div>
<div class="t" style="right:613.00px;top:152.66px;font-size:8.3px;line-height:10.79px;color:#46689e;font-weight:normal;transform:scaleY(1.12)">2,265,139</div>
<div class="t" style="right:553.00px;top:152.66px;font-size:8.3px;line-height:10.79px;color:#46689e;font-weight:normal;transform:scaleY(1.12)">2,465,108</div>
<div class="t" style="right:493.00px;top:152.66px;font-size:8.3px;line-height:10.79px;color:#46689e;font-weight:normal;transform:scaleY(1.12)">2,492,900</div>
<div class="t" style="right:433.00px;top:152.66px;font-size:8.3px;line-height:10.79px;color:#46689e;font-weight:normal;transform:scaleY(1.12)">2,530,815</div>
<div class="t" style="right:370.00px;top:152.66px;font-size:8.3px;line-height:10.79px;color:#46689e;font-weight:normal;transform:scaleY(1.12)">2,553,059</div>
<div class="t" style="right:307.00px;top:152.66px;font-size:8.3px;line-height:10.79px;color:#46689e;font-weight:normal;transform:scaleY(1.12)">2,553,485</div>
<div class="t" style="right:245.00px;top:152.66px;font-size:8.3px;line-height:10.79px;color:#46689e;font-weight:normal;transform:scaleY(1.12)">2,553,928</div>
<div class="t" style="right:182.00px;top:152.66px;font-size:8.3px;line-height:10.79px;color:#46689e;font-weight:normal;transform:scaleY(1.12)">2,553,928</div>
<div class="t" style="right:119.00px;top:152.66px;font-size:8.3px;line-height:10.79px;color:#46689e;font-weight:normal;transform:scaleY(1.12)">2,554,330</div>
<div class="t" style="right:57.00px;top:152.66px;font-size:8.3px;line-height:10.79px;color:#46689e;font-weight:normal;transform:scaleY(1.12)">2,554,330</div>
<div class="t" style="right:-6.00px;top:152.66px;font-size:8.3px;line-height:10.79px;color:#46689e;font-weight:normal;transform:scaleY(1.12)">2,556,379</div>
<div class="t" style="left:31.00px;top:165.16px;font-size:8.3px;line-height:10.79px;color:#46689e;font-weight:normal;">OPEX</div>
<div class="t" style="right:790.50px;top:165.16px;font-size:8.3px;line-height:10.79px;color:#46689e;font-weight:normal;transform:scaleY(1.12)">(616,350)</div>
<div class="t" style="right:730.50px;top:165.16px;font-size:8.3px;line-height:10.79px;color:#46689e;font-weight:normal;transform:scaleY(1.12)">(944,738)</div>
<div class="t" style="right:670.50px;top:165.16px;font-size:8.3px;line-height:10.79px;color:#46689e;font-weight:normal;transform:scaleY(1.12)">(1,189,265)</div>
<div class="t" style="right:610.50px;top:165.16px;font-size:8.3px;line-height:10.79px;color:#46689e;font-weight:normal;transform:scaleY(1.12)">(1,103,212)</div>
<div class="t" style="right:550.50px;top:165.16px;font-size:8.3px;line-height:10.79px;color:#46689e;font-weight:normal;transform:scaleY(1.12)">(1,194,516)</div>
<div class="t" style="right:490.50px;top:165.16px;font-size:8.3px;line-height:10.79px;color:#46689e;font-weight:normal;transform:scaleY(1.12)">(1,242,780)</div>
<div class="t" style="right:430.50px;top:165.16px;font-size:8.3px;line-height:10.79px;color:#46689e;font-weight:normal;transform:scaleY(1.12)">(1,357,710)</div>
<div class="t" style="right:367.50px;top:165.16px;font-size:8.3px;line-height:10.79px;color:#46689e;font-weight:normal;transform:scaleY(1.12)">(1,382,390)</div>
<div class="t" style="right:304.50px;top:165.16px;font-size:8.3px;line-height:10.79px;color:#46689e;font-weight:normal;transform:scaleY(1.12)">(1,407,987)</div>
<div class="t" style="right:242.50px;top:165.16px;font-size:8.3px;line-height:10.79px;color:#46689e;font-weight:normal;transform:scaleY(1.12)">(1,434,543)</div>
<div class="t" style="right:179.50px;top:165.16px;font-size:8.3px;line-height:10.79px;color:#46689e;font-weight:normal;transform:scaleY(1.12)">(1,434,543)</div>
<div class="t" style="right:116.50px;top:165.16px;font-size:8.3px;line-height:10.79px;color:#46689e;font-weight:normal;transform:scaleY(1.12)">(1,458,649)</div>
<div class="t" style="right:54.50px;top:165.16px;font-size:8.3px;line-height:10.79px;color:#46689e;font-weight:normal;transform:scaleY(1.12)">(1,458,649)</div>
<div class="t" style="right:-8.50px;top:165.16px;font-size:8.3px;line-height:10.79px;color:#46689e;font-weight:normal;transform:scaleY(1.12)">(1,581,000)</div>
<div class="t" style="left:31.00px;top:177.66px;font-size:8.3px;line-height:10.79px;color:#46689e;font-weight:normal;">Other Investing Cash Flows</div>
<div class="t tc" style="left:81.00px;width:200px;top:177.66px;font-size:8.3px;line-height:10.79px;color:#46689e;font-weight:normal;transform:scaleY(1.12)">-</div>
<div class="t tc" style="left:141.00px;width:200px;top:177.66px;font-size:8.3px;line-height:10.79px;color:#46689e;font-weight:normal;transform:scaleY(1.12)">-</div>
<div class="t tc" style="left:201.00px;width:200px;top:177.66px;font-size:8.3px;line-height:10.79px;color:#46689e;font-weight:normal;transform:scaleY(1.12)">-</div>
<div class="t tc" style="left:261.00px;width:200px;top:177.66px;font-size:8.3px;line-height:10.79px;color:#46689e;font-weight:normal;transform:scaleY(1.12)">-</div>
<div class="t tc" style="left:321.00px;width:200px;top:177.66px;font-size:8.3px;line-height:10.79px;color:#46689e;font-weight:normal;transform:scaleY(1.12)">-</div>
<div class="t tc" style="left:381.00px;width:200px;top:177.66px;font-size:8.3px;line-height:10.79px;color:#46689e;font-weight:normal;transform:scaleY(1.12)">-</div>
<div class="t tc" style="left:441.00px;width:200px;top:177.66px;font-size:8.3px;line-height:10.79px;color:#46689e;font-weight:normal;transform:scaleY(1.12)">-</div>
<div class="t tc" style="left:502.50px;width:200px;top:177.66px;font-size:8.3px;line-height:10.79px;color:#46689e;font-weight:normal;transform:scaleY(1.12)">-</div>
<div class="t tc" style="left:565.50px;width:200px;top:177.66px;font-size:8.3px;line-height:10.79px;color:#46689e;font-weight:normal;transform:scaleY(1.12)">-</div>
<div class="t tc" style="left:628.00px;width:200px;top:177.66px;font-size:8.3px;line-height:10.79px;color:#46689e;font-weight:normal;transform:scaleY(1.12)">-</div>
<div class="t tc" style="left:690.50px;width:200px;top:177.66px;font-size:8.3px;line-height:10.79px;color:#46689e;font-weight:normal;transform:scaleY(1.12)">-</div>
<div class="t tc" style="left:753.50px;width:200px;top:177.66px;font-size:8.3px;line-height:10.79px;color:#46689e;font-weight:normal;transform:scaleY(1.12)">-</div>
<div class="t tc" style="left:816.00px;width:200px;top:177.66px;font-size:8.3px;line-height:10.79px;color:#46689e;font-weight:normal;transform:scaleY(1.12)">-</div>
<div class="t tc" style="left:878.50px;width:200px;top:177.66px;font-size:8.3px;line-height:10.79px;color:#46689e;font-weight:normal;transform:scaleY(1.12)">-</div>
<div class="t" style="left:31.00px;top:190.16px;font-size:8.3px;line-height:10.79px;color:#46689e;font-weight:normal;">Investing Cash Flows</div>
<div class="t" style="right:793.00px;top:190.16px;font-size:8.3px;line-height:10.79px;color:#46689e;font-weight:normal;transform:scaleY(1.12)">20,637,218</div>
<div class="t" style="right:733.00px;top:190.16px;font-size:8.3px;line-height:10.79px;color:#46689e;font-weight:normal;transform:scaleY(1.12)">10,280,200</div>
<div class="t" style="right:673.00px;top:190.16px;font-size:8.3px;line-height:10.79px;color:#46689e;font-weight:normal;transform:scaleY(1.12)">13,226,851</div>
<div class="t" style="right:613.00px;top:190.16px;font-size:8.3px;line-height:10.79px;color:#46689e;font-weight:normal;transform:scaleY(1.12)">8,166,713</div>
<div class="t" style="right:553.00px;top:190.16px;font-size:8.3px;line-height:10.79px;color:#46689e;font-weight:normal;transform:scaleY(1.12)">9,058,458</div>
<div class="t" style="right:493.00px;top:190.16px;font-size:8.3px;line-height:10.79px;color:#46689e;font-weight:normal;transform:scaleY(1.12)">9,059,218</div>
<div class="t" style="right:433.00px;top:190.16px;font-size:8.3px;line-height:10.79px;color:#46689e;font-weight:normal;transform:scaleY(1.12)">9,059,218</div>
<div class="t" style="right:370.00px;top:190.16px;font-size:8.3px;line-height:10.79px;color:#46689e;font-weight:normal;transform:scaleY(1.12)">9,059,218</div>
<div class="t" style="right:307.00px;top:190.16px;font-size:8.3px;line-height:10.79px;color:#46689e;font-weight:normal;transform:scaleY(1.12)">9,059,218</div>
<div class="t" style="right:245.00px;top:190.16px;font-size:8.3px;line-height:10.79px;color:#46689e;font-weight:normal;transform:scaleY(1.12)">4,009,218</div>
<div class="t" style="right:182.00px;top:190.16px;font-size:8.3px;line-height:10.79px;color:#46689e;font-weight:normal;transform:scaleY(1.12)">3,009,218</div>
<div class="t" style="right:119.00px;top:190.16px;font-size:8.3px;line-height:10.79px;color:#46689e;font-weight:normal;transform:scaleY(1.12)">3,009,218</div>
<div class="t" style="right:57.00px;top:190.16px;font-size:8.3px;line-height:10.79px;color:#46689e;font-weight:normal;transform:scaleY(1.12)">3,009,218</div>
<div class="t" style="right:-6.00px;top:190.16px;font-size:8.3px;line-height:10.79px;color:#46689e;font-weight:normal;transform:scaleY(1.12)">3,009,218</div>
<div style="position:absolute;left:26px;top:201.00px;width:125px;height:12.5px;overflow:hidden">
<svg style="left:3.00px;top:-1.45px;overflow:visible" width="128.00" height="16.60"><text x="2" y="11.04" font-family="Liberation Sans" font-size="8.3" font-weight="normal" fill="#46689e" textLength="124.00" lengthAdjust="spacingAndGlyphs">Debt Drawdowns/(Repayments)</text></svg>
</div>
<div class="t" style="right:790.50px;top:202.66px;font-size:8.3px;line-height:10.79px;color:#46689e;font-weight:normal;transform:scaleY(1.12)">(184,998)</div>
<div class="t" style="right:730.50px;top:202.66px;font-size:8.3px;line-height:10.79px;color:#46689e;font-weight:normal;transform:scaleY(1.12)">(16,818)</div>
<div class="t" style="right:670.50px;top:202.66px;font-size:8.3px;line-height:10.79px;color:#46689e;font-weight:normal;transform:scaleY(1.12)">(234,024)</div>
<div class="t" style="right:610.50px;top:202.66px;font-size:8.3px;line-height:10.79px;color:#46689e;font-weight:normal;transform:scaleY(1.12)">(180,000)</div>
<div class="t" style="right:550.50px;top:202.66px;font-size:8.3px;line-height:10.79px;color:#46689e;font-weight:normal;transform:scaleY(1.12)">(180,000)</div>
<div class="t" style="right:490.50px;top:202.66px;font-size:8.3px;line-height:10.79px;color:#46689e;font-weight:normal;transform:scaleY(1.12)">(180,000)</div>
<div class="t" style="right:430.50px;top:202.66px;font-size:8.3px;line-height:10.79px;color:#46689e;font-weight:normal;transform:scaleY(1.12)">(180,000)</div>
<div class="t" style="right:367.50px;top:202.66px;font-size:8.3px;line-height:10.79px;color:#46689e;font-weight:normal;transform:scaleY(1.12)">(109,162)</div>
<div class="t" style="right:307.50px;top:202.66px;font-size:8.3px;line-height:10.79px;color:#46689e;font-weight:normal;transform:scaleY(1.12)">-</div>
<div class="t" style="right:245.50px;top:202.66px;font-size:8.3px;line-height:10.79px;color:#46689e;font-weight:normal;transform:scaleY(1.12)">-</div>
<div class="t" style="right:182.50px;top:202.66px;font-size:8.3px;line-height:10.79px;color:#46689e;font-weight:normal;transform:scaleY(1.12)">-</div>
<div class="t" style="right:119.50px;top:202.66px;font-size:8.3px;line-height:10.79px;color:#46689e;font-weight:normal;transform:scaleY(1.12)">-</div>
<div class="t" style="right:57.50px;top:202.66px;font-size:8.3px;line-height:10.79px;color:#46689e;font-weight:normal;transform:scaleY(1.12)">-</div>
<div class="t" style="right:-5.50px;top:202.66px;font-size:8.3px;line-height:10.79px;color:#46689e;font-weight:normal;transform:scaleY(1.12)">-</div>
<div class="t" style="left:31.00px;top:215.16px;font-size:8.3px;line-height:10.79px;color:#46689e;font-weight:normal;">Equity Raisings/(Buybacks)</div>
<div class="t tc" style="left:81.00px;width:200px;top:215.16px;font-size:8.3px;line-height:10.79px;color:#46689e;font-weight:normal;transform:scaleY(1.12)">-</div>
<div class="t tc" style="left:141.00px;width:200px;top:215.16px;font-size:8.3px;line-height:10.79px;color:#46689e;font-weight:normal;transform:scaleY(1.12)">-</div>
<div class="t tc" style="left:201.00px;width:200px;top:215.16px;font-size:8.3px;line-height:10.79px;color:#46689e;font-weight:normal;transform:scaleY(1.12)">-</div>
<div class="t tc" style="left:261.00px;width:200px;top:215.16px;font-size:8.3px;line-height:10.79px;color:#46689e;font-weight:normal;transform:scaleY(1.12)">-</div>
<div class="t tc" style="left:321.00px;width:200px;top:215.16px;font-size:8.3px;line-height:10.79px;color:#46689e;font-weight:normal;transform:scaleY(1.12)">-</div>
<div class="t tc" style="left:381.00px;width:200px;top:215.16px;font-size:8.3px;line-height:10.79px;color:#46689e;font-weight:normal;transform:scaleY(1.12)">-</div>
<div class="t" style="right:433.50px;top:215.16px;font-size:8.3px;line-height:10.79px;color:#46689e;font-weight:normal;transform:scaleY(1.12)">-</div>
<div class="t tc" style="left:502.50px;width:200px;top:215.16px;font-size:8.3px;line-height:10.79px;color:#46689e;font-weight:normal;transform:scaleY(1.12)">-</div>
<div class="t tc" style="left:565.50px;width:200px;top:215.16px;font-size:8.3px;line-height:10.79px;color:#46689e;font-weight:normal;transform:scaleY(1.12)">-</div>
<div class="t tc" style="left:628.00px;width:200px;top:215.16px;font-size:8.3px;line-height:10.79px;color:#46689e;font-weight:normal;transform:scaleY(1.12)">-</div>
<div class="t tc" style="left:690.50px;width:200px;top:215.16px;font-size:8.3px;line-height:10.79px;color:#46689e;font-weight:normal;transform:scaleY(1.12)">-</div>
<div class="t tc" style="left:753.50px;width:200px;top:215.16px;font-size:8.3px;line-height:10.79px;color:#46689e;font-weight:normal;transform:scaleY(1.12)">-</div>
<div class="t tc" style="left:816.00px;width:200px;top:215.16px;font-size:8.3px;line-height:10.79px;color:#46689e;font-weight:normal;transform:scaleY(1.12)">-</div>
<div class="t tc" style="left:878.50px;width:200px;top:215.16px;font-size:8.3px;line-height:10.79px;color:#46689e;font-weight:normal;transform:scaleY(1.12)">-</div>
<div class="t" style="left:31.00px;top:227.66px;font-size:8.3px;line-height:10.79px;color:#46689e;font-weight:normal;">Other Financing Cash Flows</div>
<div class="t tc" style="left:81.00px;width:200px;top:227.66px;font-size:8.3px;line-height:10.79px;color:#46689e;font-weight:normal;transform:scaleY(1.12)">-</div>
<div class="t tc" style="left:141.00px;width:200px;top:227.66px;font-size:8.3px;line-height:10.79px;color:#46689e;font-weight:normal;transform:scaleY(1.12)">-</div>
<div class="t tc" style="left:201.00px;width:200px;top:227.66px;font-size:8.3px;line-height:10.79px;color:#46689e;font-weight:normal;transform:scaleY(1.12)">-</div>
<div class="t tc" style="left:261.00px;width:200px;top:227.66px;font-size:8.3px;line-height:10.79px;color:#46689e;font-weight:normal;transform:scaleY(1.12)">-</div>
<div class="t tc" style="left:321.00px;width:200px;top:227.66px;font-size:8.3px;line-height:10.79px;color:#46689e;font-weight:normal;transform:scaleY(1.12)">-</div>
<div class="t tc" style="left:381.00px;width:200px;top:227.66px;font-size:8.3px;line-height:10.79px;color:#46689e;font-weight:normal;transform:scaleY(1.12)">-</div>
<div class="t" style="right:433.50px;top:227.66px;font-size:8.3px;line-height:10.79px;color:#46689e;font-weight:normal;transform:scaleY(1.12)">-</div>
<div class="t tc" style="left:502.50px;width:200px;top:227.66px;font-size:8.3px;line-height:10.79px;color:#46689e;font-weight:normal;transform:scaleY(1.12)">-</div>
<div class="t tc" style="left:565.50px;width:200px;top:227.66px;font-size:8.3px;line-height:10.79px;color:#46689e;font-weight:normal;transform:scaleY(1.12)">-</div>
<div class="t tc" style="left:628.00px;width:200px;top:227.66px;font-size:8.3px;line-height:10.79px;color:#46689e;font-weight:normal;transform:scaleY(1.12)">-</div>
<div class="t tc" style="left:690.50px;width:200px;top:227.66px;font-size:8.3px;line-height:10.79px;color:#46689e;font-weight:normal;transform:scaleY(1.12)">-</div>
<div class="t tc" style="left:753.50px;width:200px;top:227.66px;font-size:8.3px;line-height:10.79px;color:#46689e;font-weight:normal;transform:scaleY(1.12)">-</div>
<div class="t tc" style="left:816.00px;width:200px;top:227.66px;font-size:8.3px;line-height:10.79px;color:#46689e;font-weight:normal;transform:scaleY(1.12)">-</div>
<div class="t tc" style="left:878.50px;width:200px;top:227.66px;font-size:8.3px;line-height:10.79px;color:#46689e;font-weight:normal;transform:scaleY(1.12)">-</div>
<div class="t" style="left:31.00px;top:240.16px;font-size:8.3px;line-height:10.79px;color:#46689e;font-weight:normal;">Financing Cash Flows</div>
<div class="t" style="right:793.00px;top:240.16px;font-size:8.3px;line-height:10.79px;color:#46689e;font-weight:normal;transform:scaleY(1.12)">16,290,012</div>
<div class="t" style="right:733.00px;top:240.16px;font-size:8.3px;line-height:10.79px;color:#46689e;font-weight:normal;transform:scaleY(1.12)">13,868,220</div>
<div class="t" style="right:673.00px;top:240.16px;font-size:8.3px;line-height:10.79px;color:#46689e;font-weight:normal;transform:scaleY(1.12)">11,205,876</div>
<div class="t" style="right:613.00px;top:240.16px;font-size:8.3px;line-height:10.79px;color:#46689e;font-weight:normal;transform:scaleY(1.12)">8,779,944</div>
<div class="t" style="right:553.00px;top:240.16px;font-size:8.3px;line-height:10.79px;color:#46689e;font-weight:normal;transform:scaleY(1.12)">6,619,944</div>
<div class="t" style="right:493.00px;top:240.16px;font-size:8.3px;line-height:10.79px;color:#46689e;font-weight:normal;transform:scaleY(1.12)">4,459,944</div>
<div class="t" style="right:433.00px;top:240.16px;font-size:8.3px;line-height:10.79px;color:#46689e;font-weight:normal;transform:scaleY(1.12)">2,299,944</div>
<div class="t" style="right:370.00px;top:240.16px;font-size:8.3px;line-height:10.79px;color:#46689e;font-weight:normal;transform:scaleY(1.12)">339,972</div>
<div class="t" style="right:307.50px;top:240.16px;font-size:8.3px;line-height:10.79px;color:#46689e;font-weight:normal;transform:scaleY(1.12)">-</div>
<div class="t" style="right:245.50px;top:240.16px;font-size:8.3px;line-height:10.79px;color:#46689e;font-weight:normal;transform:scaleY(1.12)">-</div>
<div class="t" style="right:182.50px;top:240.16px;font-size:8.3px;line-height:10.79px;color:#46689e;font-weight:normal;transform:scaleY(1.12)">-</div>
<div class="t" style="right:119.50px;top:240.16px;font-size:8.3px;line-height:10.79px;color:#46689e;font-weight:normal;transform:scaleY(1.12)">-</div>
<div class="t" style="right:57.50px;top:240.16px;font-size:8.3px;line-height:10.79px;color:#46689e;font-weight:normal;transform:scaleY(1.12)">-</div>
<div class="t" style="right:-5.50px;top:240.16px;font-size:8.3px;line-height:10.79px;color:#46689e;font-weight:normal;transform:scaleY(1.12)">-</div>
<div class="t" style="left:31.00px;top:252.66px;font-size:8.3px;line-height:10.79px;color:#46689e;font-weight:normal;">Change In Cash Held</div>
<div class="t" style="right:793.00px;top:252.66px;font-size:8.3px;line-height:10.79px;color:#46689e;font-weight:normal;transform:scaleY(1.12)">1,876,009</div>
<div class="t" style="right:733.00px;top:252.66px;font-size:8.3px;line-height:10.79px;color:#46689e;font-weight:normal;transform:scaleY(1.12)">2,002,554</div>
<div class="t" style="right:673.00px;top:252.66px;font-size:8.3px;line-height:10.79px;color:#46689e;font-weight:normal;transform:scaleY(1.12)">2,308,826</div>
<div class="t" style="right:613.00px;top:252.66px;font-size:8.3px;line-height:10.79px;color:#46689e;font-weight:normal;transform:scaleY(1.12)">2,265,139</div>
<div class="t" style="right:553.00px;top:252.66px;font-size:8.3px;line-height:10.79px;color:#46689e;font-weight:normal;transform:scaleY(1.12)">2,465,108</div>
<div class="t" style="right:493.00px;top:252.66px;font-size:8.3px;line-height:10.79px;color:#46689e;font-weight:normal;transform:scaleY(1.12)">2,492,900</div>
<div class="t" style="right:433.00px;top:252.66px;font-size:8.3px;line-height:10.79px;color:#46689e;font-weight:normal;transform:scaleY(1.12)">2,530,815</div>
<div class="t" style="right:370.00px;top:252.66px;font-size:8.3px;line-height:10.79px;color:#46689e;font-weight:normal;transform:scaleY(1.12)">2,553,059</div>
<div class="t" style="right:307.00px;top:252.66px;font-size:8.3px;line-height:10.79px;color:#46689e;font-weight:normal;transform:scaleY(1.12)">2,553,485</div>
<div class="t" style="right:245.00px;top:252.66px;font-size:8.3px;line-height:10.79px;color:#46689e;font-weight:normal;transform:scaleY(1.12)">2,553,928</div>
<div class="t" style="right:182.00px;top:252.66px;font-size:8.3px;line-height:10.79px;color:#46689e;font-weight:normal;transform:scaleY(1.12)">2,553,928</div>
<div class="t" style="right:119.00px;top:252.66px;font-size:8.3px;line-height:10.79px;color:#46689e;font-weight:normal;transform:scaleY(1.12)">2,554,330</div>
<div class="t" style="right:57.00px;top:252.66px;font-size:8.3px;line-height:10.79px;color:#46689e;font-weight:normal;transform:scaleY(1.12)">2,554,330</div>
<div class="t" style="right:-6.00px;top:252.66px;font-size:8.3px;line-height:10.79px;color:#46689e;font-weight:normal;transform:scaleY(1.12)">2,556,379</div>
<div class="t" style="left:31.00px;top:265.16px;font-size:8.3px;line-height:10.79px;color:#46689e;font-weight:normal;">Closing Cash</div>
<div class="t" style="right:793.00px;top:265.16px;font-size:8.3px;line-height:10.79px;color:#46689e;font-weight:normal;transform:scaleY(1.12)">5,017,020</div>
<div class="t" style="right:733.00px;top:265.16px;font-size:8.3px;line-height:10.79px;color:#46689e;font-weight:normal;transform:scaleY(1.12)">5,068,295</div>
<div class="t" style="right:673.00px;top:265.16px;font-size:8.3px;line-height:10.79px;color:#46689e;font-weight:normal;transform:scaleY(1.12)">5,446,815</div>
<div class="t" style="right:613.00px;top:265.16px;font-size:8.3px;line-height:10.79px;color:#46689e;font-weight:normal;transform:scaleY(1.12)">5,179,440</div>
<div class="t" style="right:553.00px;top:265.16px;font-size:8.3px;line-height:10.79px;color:#46689e;font-weight:normal;transform:scaleY(1.12)">5,399,378</div>
<div class="t" style="right:493.00px;top:265.16px;font-size:8.3px;line-height:10.79px;color:#46689e;font-weight:normal;transform:scaleY(1.12)">5,274,961</div>
<div class="t" style="right:433.00px;top:265.16px;font-size:8.3px;line-height:10.79px;color:#46689e;font-weight:normal;transform:scaleY(1.12)">5,170,792</div>
<div class="t" style="right:370.00px;top:265.16px;font-size:8.3px;line-height:10.79px;color:#46689e;font-weight:normal;transform:scaleY(1.12)">5,106,118</div>
<div class="t" style="right:307.00px;top:265.16px;font-size:8.3px;line-height:10.79px;color:#46689e;font-weight:normal;transform:scaleY(1.12)">5,106,971</div>
<div class="t" style="right:245.00px;top:265.16px;font-size:8.3px;line-height:10.79px;color:#46689e;font-weight:normal;transform:scaleY(1.12)">5,107,856</div>
<div class="t" style="right:182.00px;top:265.16px;font-size:8.3px;line-height:10.79px;color:#46689e;font-weight:normal;transform:scaleY(1.12)">5,107,856</div>
<div class="t" style="right:119.00px;top:265.16px;font-size:8.3px;line-height:10.79px;color:#46689e;font-weight:normal;transform:scaleY(1.12)">5,108,660</div>
<div class="t" style="right:57.00px;top:265.16px;font-size:8.3px;line-height:10.79px;color:#46689e;font-weight:normal;transform:scaleY(1.12)">5,108,660</div>
<div class="t" style="right:-6.00px;top:265.16px;font-size:8.3px;line-height:10.79px;color:#46689e;font-weight:normal;transform:scaleY(1.12)">5,112,758</div>
</div>
<svg style="left:151px;top:163.00px" width="5" height="5" viewBox="0 0 5 5"><path d="M0.5 0.5 L4.5 0.5 L0.5 3.8 Z" fill="#222"/></svg>
<svg style="left:151px;top:238.00px" width="5" height="5" viewBox="0 0 5 5"><path d="M0.5 0.5 L4.5 0.5 L0.5 3.8 Z" fill="#222"/></svg>
<div class="r" style="left:25.5px;top:307.5px;width:974.5px;height:234.0px;border:1px solid #ededed;box-sizing:border-box;background:#fff"></div>
<div class="r" style="left:131.00px;top:437.70px;width:854.00px;height:1.00px;background:#e8e8e8;"></div>
<div class="t" style="right:878.00px;top:433.05px;font-size:7.15px;line-height:9.29px;color:#595959;font-weight:normal;">-</div>
<div class="r" style="left:131.00px;top:413.20px;width:854.00px;height:1.00px;background:#e8e8e8;"></div>
<div class="t" style="right:878.00px;top:411.05px;font-size:7.15px;line-height:9.29px;color:#595959;font-weight:normal;">5,000,000</div>
<div class="r" style="left:131.00px;top:388.70px;width:854.00px;height:1.00px;background:#e8e8e8;"></div>
<div class="t" style="right:878.00px;top:386.55px;font-size:7.15px;line-height:9.29px;color:#595959;font-weight:normal;">10,000,000</div>
<div class="r" style="left:131.00px;top:364.20px;width:854.00px;height:1.00px;background:#e8e8e8;"></div>
<div class="t" style="right:878.00px;top:362.05px;font-size:7.15px;line-height:9.29px;color:#595959;font-weight:normal;">15,000,000</div>
<div class="r" style="left:131.00px;top:339.70px;width:854.00px;height:1.00px;background:#e8e8e8;"></div>
<div class="t" style="right:878.00px;top:337.55px;font-size:7.15px;line-height:9.29px;color:#595959;font-weight:normal;">20,000,000</div>
<div class="r" style="left:131.00px;top:315.20px;width:854.00px;height:1.00px;background:#e8e8e8;"></div>
<div class="t" style="right:878.00px;top:313.05px;font-size:7.15px;line-height:9.29px;color:#595959;font-weight:normal;">25,000,000</div>
<svg style="left:0;top:0" width="1000" height="592" viewBox="0 0 1000 592"><rect x="143.30" y="429.01" width="9.8" height="9.19" fill="#4472c4"/><rect x="156.90" y="337.08" width="9.8" height="101.12" fill="#ed7d31"/><rect x="170.50" y="358.38" width="9.8" height="79.82" fill="#a5a5a5"/><rect x="203.90" y="428.39" width="9.8" height="9.81" fill="#4472c4"/><rect x="217.50" y="387.83" width="9.8" height="50.37" fill="#ed7d31"/><rect x="231.10" y="370.25" width="9.8" height="67.95" fill="#a5a5a5"/><rect x="264.50" y="426.89" width="9.8" height="11.31" fill="#4472c4"/><rect x="278.10" y="373.39" width="9.8" height="64.81" fill="#ed7d31"/><rect x="291.70" y="383.29" width="9.8" height="54.91" fill="#a5a5a5"/><rect x="325.10" y="427.10" width="9.8" height="11.10" fill="#4472c4"/><rect x="338.70" y="398.18" width="9.8" height="40.02" fill="#ed7d31"/><rect x="352.30" y="395.18" width="9.8" height="43.02" fill="#a5a5a5"/><rect x="385.70" y="426.12" width="9.8" height="12.08" fill="#4472c4"/><rect x="399.30" y="393.81" width="9.8" height="44.39" fill="#ed7d31"/><rect x="412.90" y="405.76" width="9.8" height="32.44" fill="#a5a5a5"/><rect x="446.30" y="425.98" width="9.8" height="12.22" fill="#4472c4"/><rect x="459.90" y="393.81" width="9.8" height="44.39" fill="#ed7d31"/><rect x="473.50" y="416.35" width="9.8" height="21.85" fill="#a5a5a5"/><rect x="506.90" y="425.80" width="9.8" height="12.40" fill="#4472c4"/><rect x="520.50" y="393.81" width="9.8" height="44.39" fill="#ed7d31"/><rect x="534.10" y="426.93" width="9.8" height="11.27" fill="#a5a5a5"/><rect x="567.50" y="425.69" width="9.8" height="12.51" fill="#4472c4"/><rect x="581.10" y="393.81" width="9.8" height="44.39" fill="#ed7d31"/><rect x="594.70" y="436.53" width="9.8" height="1.67" fill="#a5a5a5"/><rect x="628.10" y="425.69" width="9.8" height="12.51" fill="#4472c4"/><rect x="641.70" y="393.81" width="9.8" height="44.39" fill="#ed7d31"/><rect x="688.70" y="425.69" width="9.8" height="12.51" fill="#4472c4"/><rect x="702.30" y="418.55" width="9.8" height="19.65" fill="#ed7d31"/><rect x="749.30" y="425.69" width="9.8" height="12.51" fill="#4472c4"/><rect x="762.90" y="423.45" width="9.8" height="14.75" fill="#ed7d31"/><rect x="809.90" y="425.68" width="9.8" height="12.52" fill="#4472c4"/><rect x="823.50" y="423.45" width="9.8" height="14.75" fill="#ed7d31"/><rect x="870.50" y="425.68" width="9.8" height="12.52" fill="#4472c4"/><rect x="884.10" y="423.45" width="9.8" height="14.75" fill="#ed7d31"/><rect x="931.10" y="425.67" width="9.8" height="12.53" fill="#4472c4"/><rect x="944.70" y="423.45" width="9.8" height="14.75" fill="#ed7d31"/><polyline points="161.30,413.62 221.90,413.37 282.50,411.51 343.10,412.82 403.70,411.74 464.30,412.35 524.90,412.86 585.50,413.18 646.10,413.18 706.70,413.17 767.30,413.17 827.90,413.17 888.50,413.17 949.10,413.15 1009.70,413.15" fill="none" stroke="#5b9bd5" stroke-width="2.2"/><polyline points="161.30,429.01 221.90,428.39 282.50,426.89 343.10,427.10 403.70,426.12 464.30,425.98 524.90,425.80 585.50,425.69 646.10,425.69 706.70,425.69 767.30,425.69 827.90,425.68 888.50,425.68 949.10,425.67 1009.70,425.67" fill="none" stroke="#ffc000" stroke-width="2.2"/></svg>
<div class="t tc" style="left:61.30px;width:200px;top:443.95px;font-size:7px;line-height:9.10px;color:#595959;font-weight:normal;">2026</div>
<div class="t tc" style="left:121.90px;width:200px;top:443.95px;font-size:7px;line-height:9.10px;color:#595959;font-weight:normal;">2027</div>
<div class="t tc" style="left:182.50px;width:200px;top:443.95px;font-size:7px;line-height:9.10px;color:#595959;font-weight:normal;">2028</div>
<div class="t tc" style="left:243.10px;width:200px;top:443.95px;font-size:7px;line-height:9.10px;color:#595959;font-weight:normal;">2029</div>
<div class="t tc" style="left:303.70px;width:200px;top:443.95px;font-size:7px;line-height:9.10px;color:#595959;font-weight:normal;">2030</div>
<div class="t tc" style="left:364.30px;width:200px;top:443.95px;font-size:7px;line-height:9.10px;color:#595959;font-weight:normal;">2031</div>
<div class="t tc" style="left:424.90px;width:200px;top:443.95px;font-size:7px;line-height:9.10px;color:#595959;font-weight:normal;">2032</div>
<div class="t tc" style="left:485.50px;width:200px;top:443.95px;font-size:7px;line-height:9.10px;color:#595959;font-weight:normal;">2033</div>
<div class="t tc" style="left:546.10px;width:200px;top:443.95px;font-size:7px;line-height:9.10px;color:#595959;font-weight:normal;">2034</div>
<div class="t tc" style="left:606.70px;width:200px;top:443.95px;font-size:7px;line-height:9.10px;color:#595959;font-weight:normal;">2035</div>
<div class="t tc" style="left:667.30px;width:200px;top:443.95px;font-size:7px;line-height:9.10px;color:#595959;font-weight:normal;">2036</div>
<div class="t tc" style="left:727.90px;width:200px;top:443.95px;font-size:7px;line-height:9.10px;color:#595959;font-weight:normal;">2037</div>
<div class="t tc" style="left:788.50px;width:200px;top:443.95px;font-size:7px;line-height:9.10px;color:#595959;font-weight:normal;">2038</div>
<div class="t tc" style="left:849.10px;width:200px;top:443.95px;font-size:7px;line-height:9.10px;color:#595959;font-weight:normal;">2039</div>
<div class="r" style="left:131.00px;top:458.00px;width:852.50px;height:1.00px;background:#ebebeb;"></div>
<div class="r" style="left:34.00px;top:468.50px;width:949.50px;height:1.00px;background:#ebebeb;"></div>
<div class="r" style="left:34.00px;top:481.00px;width:949.50px;height:1.00px;background:#ebebeb;"></div>
<div class="r" style="left:34.00px;top:493.20px;width:949.50px;height:1.00px;background:#ebebeb;"></div>
<div class="r" style="left:34.00px;top:505.50px;width:949.50px;height:1.00px;background:#ebebeb;"></div>
<div class="r" style="left:34.00px;top:517.70px;width:949.50px;height:1.00px;background:#ebebeb;"></div>
<div class="r" style="left:34.00px;top:529.50px;width:949.50px;height:1.00px;background:#ebebeb;"></div>
<div class="r" style="left:130.50px;top:458.00px;width:1.00px;height:72.00px;background:#ebebeb;"></div>
<div class="r" style="left:191.10px;top:458.00px;width:1.00px;height:72.00px;background:#ebebeb;"></div>
<div class="r" style="left:251.70px;top:458.00px;width:1.00px;height:72.00px;background:#ebebeb;"></div>
<div class="r" style="left:312.30px;top:458.00px;width:1.00px;height:72.00px;background:#ebebeb;"></div>
<div class="r" style="left:372.90px;top:458.00px;width:1.00px;height:72.00px;background:#ebebeb;"></div>
<div class="r" style="left:433.50px;top:458.00px;width:1.00px;height:72.00px;background:#ebebeb;"></div>
<div class="r" style="left:494.10px;top:458.00px;width:1.00px;height:72.00px;background:#ebebeb;"></div>
<div class="r" style="left:554.70px;top:458.00px;width:1.00px;height:72.00px;background:#ebebeb;"></div>
<div class="r" style="left:615.30px;top:458.00px;width:1.00px;height:72.00px;background:#ebebeb;"></div>
<div class="r" style="left:675.90px;top:458.00px;width:1.00px;height:72.00px;background:#ebebeb;"></div>
<div class="r" style="left:736.50px;top:458.00px;width:1.00px;height:72.00px;background:#ebebeb;"></div>
<div class="r" style="left:797.10px;top:458.00px;width:1.00px;height:72.00px;background:#ebebeb;"></div>
<div class="r" style="left:857.70px;top:458.00px;width:1.00px;height:72.00px;background:#ebebeb;"></div>
<div class="r" style="left:918.30px;top:458.00px;width:1.00px;height:72.00px;background:#ebebeb;"></div>
<div class="r" style="left:983.00px;top:458.00px;width:1.00px;height:72.00px;background:#ebebeb;"></div>
<div class="r" style="left:34.00px;top:468.50px;width:1.00px;height:61.00px;background:#f3f3f3;"></div>
<div class="t tc" style="left:61.30px;width:200px;top:459.75px;font-size:7px;line-height:9.10px;color:#595959;font-weight:normal;">2026</div>
<div class="t tc" style="left:121.90px;width:200px;top:459.75px;font-size:7px;line-height:9.10px;color:#595959;font-weight:normal;">2027</div>
<div class="t tc" style="left:182.50px;width:200px;top:459.75px;font-size:7px;line-height:9.10px;color:#595959;font-weight:normal;">2028</div>
<div class="t tc" style="left:243.10px;width:200px;top:459.75px;font-size:7px;line-height:9.10px;color:#595959;font-weight:normal;">2029</div>
<div class="t tc" style="left:303.70px;width:200px;top:459.75px;font-size:7px;line-height:9.10px;color:#595959;font-weight:normal;">2030</div>
<div class="t tc" style="left:364.30px;width:200px;top:459.75px;font-size:7px;line-height:9.10px;color:#595959;font-weight:normal;">2031</div>
<div class="t tc" style="left:424.90px;width:200px;top:459.75px;font-size:7px;line-height:9.10px;color:#595959;font-weight:normal;">2032</div>
<div class="t tc" style="left:485.50px;width:200px;top:459.75px;font-size:7px;line-height:9.10px;color:#595959;font-weight:normal;">2033</div>
<div class="t tc" style="left:546.10px;width:200px;top:459.75px;font-size:7px;line-height:9.10px;color:#595959;font-weight:normal;">2034</div>
<div class="t tc" style="left:606.70px;width:200px;top:459.75px;font-size:7px;line-height:9.10px;color:#595959;font-weight:normal;">2035</div>
<div class="t tc" style="left:667.30px;width:200px;top:459.75px;font-size:7px;line-height:9.10px;color:#595959;font-weight:normal;">2036</div>
<div class="t tc" style="left:727.90px;width:200px;top:459.75px;font-size:7px;line-height:9.10px;color:#595959;font-weight:normal;">2037</div>
<div class="t tc" style="left:788.50px;width:200px;top:459.75px;font-size:7px;line-height:9.10px;color:#595959;font-weight:normal;">2038</div>
<div class="t tc" style="left:849.10px;width:200px;top:459.75px;font-size:7px;line-height:9.10px;color:#595959;font-weight:normal;">2039</div>
<div class="r" style="left:38.50px;top:473.80px;width:16.50px;height:4.00px;background:#4472c4;"></div>
<div class="t" style="left:58.50px;top:471.31px;font-size:6.9px;line-height:8.97px;color:#595959;font-weight:normal;">Operating Cash Flows</div>
<div class="t tc" style="left:61.30px;width:200px;top:471.25px;font-size:7px;line-height:9.10px;color:#595959;font-weight:normal;">1,876,009</div>
<div class="t tc" style="left:121.90px;width:200px;top:471.25px;font-size:7px;line-height:9.10px;color:#595959;font-weight:normal;">2,002,554</div>
<div class="t tc" style="left:182.50px;width:200px;top:471.25px;font-size:7px;line-height:9.10px;color:#595959;font-weight:normal;">2,308,826</div>
<div class="t tc" style="left:243.10px;width:200px;top:471.25px;font-size:7px;line-height:9.10px;color:#595959;font-weight:normal;">2,265,139</div>
<div class="t tc" style="left:303.70px;width:200px;top:471.25px;font-size:7px;line-height:9.10px;color:#595959;font-weight:normal;">2,465,108</div>
<div class="t tc" style="left:364.30px;width:200px;top:471.25px;font-size:7px;line-height:9.10px;color:#595959;font-weight:normal;">2,492,900</div>
<div class="t tc" style="left:424.90px;width:200px;top:471.25px;font-size:7px;line-height:9.10px;color:#595959;font-weight:normal;">2,530,815</div>
<div class="t tc" style="left:485.50px;width:200px;top:471.25px;font-size:7px;line-height:9.10px;color:#595959;font-weight:normal;">2,553,059</div>
<div class="t tc" style="left:546.10px;width:200px;top:471.25px;font-size:7px;line-height:9.10px;color:#595959;font-weight:normal;">2,553,485</div>
<div class="t tc" style="left:606.70px;width:200px;top:471.25px;font-size:7px;line-height:9.10px;color:#595959;font-weight:normal;">2,553,928</div>
<div class="t tc" style="left:667.30px;width:200px;top:471.25px;font-size:7px;line-height:9.10px;color:#595959;font-weight:normal;">2,553,928</div>
<div class="t tc" style="left:727.90px;width:200px;top:471.25px;font-size:7px;line-height:9.10px;color:#595959;font-weight:normal;">2,554,330</div>
<div class="t tc" style="left:788.50px;width:200px;top:471.25px;font-size:7px;line-height:9.10px;color:#595959;font-weight:normal;">2,554,330</div>
<div class="t tc" style="left:849.10px;width:200px;top:471.25px;font-size:7px;line-height:9.10px;color:#595959;font-weight:normal;">2,556,379</div>
<div class="r" style="left:38.50px;top:486.10px;width:16.50px;height:4.00px;background:#ed7d31;"></div>
<div class="t" style="left:58.50px;top:483.62px;font-size:6.9px;line-height:8.97px;color:#595959;font-weight:normal;">Investing Cash Flows</div>
<div class="t tc" style="left:61.30px;width:200px;top:483.55px;font-size:7px;line-height:9.10px;color:#595959;font-weight:normal;">20,637,218</div>
<div class="t tc" style="left:121.90px;width:200px;top:483.55px;font-size:7px;line-height:9.10px;color:#595959;font-weight:normal;">10,280,200</div>
<div class="t tc" style="left:182.50px;width:200px;top:483.55px;font-size:7px;line-height:9.10px;color:#595959;font-weight:normal;">13,226,851</div>
<div class="t tc" style="left:243.10px;width:200px;top:483.55px;font-size:7px;line-height:9.10px;color:#595959;font-weight:normal;">8,166,713</div>
<div class="t tc" style="left:303.70px;width:200px;top:483.55px;font-size:7px;line-height:9.10px;color:#595959;font-weight:normal;">9,058,458</div>
<div class="t tc" style="left:364.30px;width:200px;top:483.55px;font-size:7px;line-height:9.10px;color:#595959;font-weight:normal;">9,059,218</div>
<div class="t tc" style="left:424.90px;width:200px;top:483.55px;font-size:7px;line-height:9.10px;color:#595959;font-weight:normal;">9,059,218</div>
<div class="t tc" style="left:485.50px;width:200px;top:483.55px;font-size:7px;line-height:9.10px;color:#595959;font-weight:normal;">9,059,218</div>
<div class="t tc" style="left:546.10px;width:200px;top:483.55px;font-size:7px;line-height:9.10px;color:#595959;font-weight:normal;">9,059,218</div>
<div class="t tc" style="left:606.70px;width:200px;top:483.55px;font-size:7px;line-height:9.10px;color:#595959;font-weight:normal;">4,009,218</div>
<div class="t tc" style="left:667.30px;width:200px;top:483.55px;font-size:7px;line-height:9.10px;color:#595959;font-weight:normal;">3,009,218</div>
<div class="t tc" style="left:727.90px;width:200px;top:483.55px;font-size:7px;line-height:9.10px;color:#595959;font-weight:normal;">3,009,218</div>
<div class="t tc" style="left:788.50px;width:200px;top:483.55px;font-size:7px;line-height:9.10px;color:#595959;font-weight:normal;">3,009,218</div>
<div class="t tc" style="left:849.10px;width:200px;top:483.55px;font-size:7px;line-height:9.10px;color:#595959;font-weight:normal;">3,009,218</div>
<div class="r" style="left:38.50px;top:498.40px;width:16.50px;height:4.00px;background:#a5a5a5;"></div>
<div class="t" style="left:58.50px;top:495.92px;font-size:6.9px;line-height:8.97px;color:#595959;font-weight:normal;">Financing Cash Flows</div>
<div class="t tc" style="left:61.30px;width:200px;top:495.85px;font-size:7px;line-height:9.10px;color:#595959;font-weight:normal;">16,290,012</div>
<div class="t tc" style="left:121.90px;width:200px;top:495.85px;font-size:7px;line-height:9.10px;color:#595959;font-weight:normal;">13,868,220</div>
<div class="t tc" style="left:182.50px;width:200px;top:495.85px;font-size:7px;line-height:9.10px;color:#595959;font-weight:normal;">11,205,876</div>
<div class="t tc" style="left:243.10px;width:200px;top:495.85px;font-size:7px;line-height:9.10px;color:#595959;font-weight:normal;">8,779,944</div>
<div class="t tc" style="left:303.70px;width:200px;top:495.85px;font-size:7px;line-height:9.10px;color:#595959;font-weight:normal;">6,619,944</div>
<div class="t tc" style="left:364.30px;width:200px;top:495.85px;font-size:7px;line-height:9.10px;color:#595959;font-weight:normal;">4,459,944</div>
<div class="t tc" style="left:424.90px;width:200px;top:495.85px;font-size:7px;line-height:9.10px;color:#595959;font-weight:normal;">2,299,944</div>
<div class="t tc" style="left:485.50px;width:200px;top:495.85px;font-size:7px;line-height:9.10px;color:#595959;font-weight:normal;">339,972</div>
<div class="t tc" style="left:546.10px;width:200px;top:495.85px;font-size:7px;line-height:9.10px;color:#595959;font-weight:normal;">-</div>
<div class="t tc" style="left:606.70px;width:200px;top:495.85px;font-size:7px;line-height:9.10px;color:#595959;font-weight:normal;">-</div>
<div class="t tc" style="left:667.30px;width:200px;top:495.85px;font-size:7px;line-height:9.10px;color:#595959;font-weight:normal;">-</div>
<div class="t tc" style="left:727.90px;width:200px;top:495.85px;font-size:7px;line-height:9.10px;color:#595959;font-weight:normal;">-</div>
<div class="t tc" style="left:788.50px;width:200px;top:495.85px;font-size:7px;line-height:9.10px;color:#595959;font-weight:normal;">-</div>
<div class="t tc" style="left:849.10px;width:200px;top:495.85px;font-size:7px;line-height:9.10px;color:#595959;font-weight:normal;">-</div>
<div class="r" style="left:38.50px;top:511.70px;width:16.50px;height:2.00px;background:#ffc000;"></div>
<div class="t" style="left:58.50px;top:508.22px;font-size:6.9px;line-height:8.97px;color:#595959;font-weight:normal;">Change In Cash Held</div>
<div class="t tc" style="left:61.30px;width:200px;top:508.15px;font-size:7px;line-height:9.10px;color:#595959;font-weight:normal;">1,876,009</div>
<div class="t tc" style="left:121.90px;width:200px;top:508.15px;font-size:7px;line-height:9.10px;color:#595959;font-weight:normal;">2,002,554</div>
<div class="t tc" style="left:182.50px;width:200px;top:508.15px;font-size:7px;line-height:9.10px;color:#595959;font-weight:normal;">2,308,826</div>
<div class="t tc" style="left:243.10px;width:200px;top:508.15px;font-size:7px;line-height:9.10px;color:#595959;font-weight:normal;">2,265,139</div>
<div class="t tc" style="left:303.70px;width:200px;top:508.15px;font-size:7px;line-height:9.10px;color:#595959;font-weight:normal;">2,465,108</div>
<div class="t tc" style="left:364.30px;width:200px;top:508.15px;font-size:7px;line-height:9.10px;color:#595959;font-weight:normal;">2,492,900</div>
<div class="t tc" style="left:424.90px;width:200px;top:508.15px;font-size:7px;line-height:9.10px;color:#595959;font-weight:normal;">2,530,815</div>
<div class="t tc" style="left:485.50px;width:200px;top:508.15px;font-size:7px;line-height:9.10px;color:#595959;font-weight:normal;">2,553,059</div>
<div class="t tc" style="left:546.10px;width:200px;top:508.15px;font-size:7px;line-height:9.10px;color:#595959;font-weight:normal;">2,553,485</div>
<div class="t tc" style="left:606.70px;width:200px;top:508.15px;font-size:7px;line-height:9.10px;color:#595959;font-weight:normal;">2,553,928</div>
<div class="t tc" style="left:667.30px;width:200px;top:508.15px;font-size:7px;line-height:9.10px;color:#595959;font-weight:normal;">2,553,928</div>
<div class="t tc" style="left:727.90px;width:200px;top:508.15px;font-size:7px;line-height:9.10px;color:#595959;font-weight:normal;">2,554,330</div>
<div class="t tc" style="left:788.50px;width:200px;top:508.15px;font-size:7px;line-height:9.10px;color:#595959;font-weight:normal;">2,554,330</div>
<div class="t tc" style="left:849.10px;width:200px;top:508.15px;font-size:7px;line-height:9.10px;color:#595959;font-weight:normal;">2,556,379</div>
<div class="r" style="left:38.50px;top:524.00px;width:16.50px;height:2.00px;background:#5b9bd5;"></div>
<div class="t" style="left:58.50px;top:520.51px;font-size:6.9px;line-height:8.97px;color:#595959;font-weight:normal;">Closing Cash</div>
<div class="t tc" style="left:61.30px;width:200px;top:520.45px;font-size:7px;line-height:9.10px;color:#595959;font-weight:normal;">5,017,020</div>
<div class="t tc" style="left:121.90px;width:200px;top:520.45px;font-size:7px;line-height:9.10px;color:#595959;font-weight:normal;">5,068,295</div>
<div class="t tc" style="left:182.50px;width:200px;top:520.45px;font-size:7px;line-height:9.10px;color:#595959;font-weight:normal;">5,446,815</div>
<div class="t tc" style="left:243.10px;width:200px;top:520.45px;font-size:7px;line-height:9.10px;color:#595959;font-weight:normal;">5,179,440</div>
<div class="t tc" style="left:303.70px;width:200px;top:520.45px;font-size:7px;line-height:9.10px;color:#595959;font-weight:normal;">5,399,378</div>
<div class="t tc" style="left:364.30px;width:200px;top:520.45px;font-size:7px;line-height:9.10px;color:#595959;font-weight:normal;">5,274,961</div>
<div class="t tc" style="left:424.90px;width:200px;top:520.45px;font-size:7px;line-height:9.10px;color:#595959;font-weight:normal;">5,170,792</div>
<div class="t tc" style="left:485.50px;width:200px;top:520.45px;font-size:7px;line-height:9.10px;color:#595959;font-weight:normal;">5,106,118</div>
<div class="t tc" style="left:546.10px;width:200px;top:520.45px;font-size:7px;line-height:9.10px;color:#595959;font-weight:normal;">5,106,971</div>
<div class="t tc" style="left:606.70px;width:200px;top:520.45px;font-size:7px;line-height:9.10px;color:#595959;font-weight:normal;">5,107,856</div>
<div class="t tc" style="left:667.30px;width:200px;top:520.45px;font-size:7px;line-height:9.10px;color:#595959;font-weight:normal;">5,107,856</div>
<div class="t tc" style="left:727.90px;width:200px;top:520.45px;font-size:7px;line-height:9.10px;color:#595959;font-weight:normal;">5,108,660</div>
<div class="t tc" style="left:788.50px;width:200px;top:520.45px;font-size:7px;line-height:9.10px;color:#595959;font-weight:normal;">5,108,660</div>
<div class="t tc" style="left:849.10px;width:200px;top:520.45px;font-size:7px;line-height:9.10px;color:#595959;font-weight:normal;">5,112,758</div>
<div class="r" style="left:988.00px;top:49.50px;width:12.00px;height:510.00px;background:#f7f7f7;"></div>
<div class="r" style="left:988.00px;top:49.50px;width:0.80px;height:510.00px;background:#dedede;"></div>
<svg style="left:990px;top:53.5px" width="9" height="6" viewBox="0 0 9 6"><path d="M1.5 5 L4.5 1.2 L7.5 5 Z" fill="#555"/></svg>
<div class="r" style="left:991.50px;top:62.00px;width:5.60px;height:143.00px;background:#6e6e6e;border-radius:2.8px"></div>
<svg style="left:990px;top:551.5px" width="9" height="6" viewBox="0 0 9 6"><path d="M1.5 1 L4.5 4.8 L7.5 1 Z" fill="#555"/></svg>
<div class="r" style="left:0.00px;top:559.00px;width:1000.00px;height:21.00px;background:#e6e6e6;"></div>
<svg style="left:15px;top:564.3px" width="8" height="9" viewBox="0 0 8 9"><path d="M5.5 1 L2 4.5 L5.5 8" fill="none" stroke="#b0b0b0" stroke-width="1"/></svg>
<svg style="left:34.2px;top:564.3px" width="8" height="9" viewBox="0 0 8 9"><path d="M2.5 1 L6 4.5 L2.5 8" fill="none" stroke="#555" stroke-width="1"/></svg>
<svg style="left:76.75px;top:560.30px;overflow:visible" width="34.25" height="18.80"><text x="2" y="12.50" font-family="Liberation Sans" font-size="9.4" font-weight="normal" fill="#333" textLength="30.25" lengthAdjust="spacingAndGlyphs">How To</text></svg>
<div class="r" style="left:121.00px;top:562.00px;width:71.50px;height:16.00px;background:#fdfdd3;"></div>
<svg style="left:125.50px;top:560.30px;overflow:visible" width="63.50" height="18.80"><text x="2" y="12.50" font-family="Liberation Sans" font-size="9.4" font-weight="normal" fill="#222" textLength="59.50" lengthAdjust="spacingAndGlyphs">2026 Accounts</text></svg>
<svg style="left:203.00px;top:560.30px;overflow:visible" width="91.00" height="18.80"><text x="2" y="12.50" font-family="Liberation Sans" font-size="9.4" font-weight="normal" fill="#333" textLength="87.00" lengthAdjust="spacingAndGlyphs">2026 MRR Dashboard</text></svg>
<div class="r" style="left:304.50px;top:562.00px;width:56.00px;height:16.00px;background:#fdfdd3;"></div>
<svg style="left:309.00px;top:560.30px;overflow:visible" width="48.50" height="18.80"><text x="2" y="12.50" font-family="Liberation Sans" font-size="9.4" font-weight="normal" fill="#222" textLength="44.50" lengthAdjust="spacingAndGlyphs">PAYG 2026</text></svg>
<div class="r" style="left:367.50px;top:562.00px;width:40.00px;height:16.00px;background:#fdfdd3;"></div>
<svg style="left:371.00px;top:560.30px;overflow:visible" width="33.00" height="18.80"><text x="2" y="12.50" font-family="Liberation Sans" font-size="9.4" font-weight="normal" fill="#222" textLength="29.00" lengthAdjust="spacingAndGlyphs">IS 2026</text></svg>
<div class="r" style="left:413.75px;top:562.00px;width:42.25px;height:16.00px;background:#fdfdd3;"></div>
<svg style="left:416.00px;top:560.30px;overflow:visible" width="37.00" height="18.80"><text x="2" y="12.50" font-family="Liberation Sans" font-size="9.4" font-weight="normal" fill="#222" textLength="33.00" lengthAdjust="spacingAndGlyphs">CF 2026</text></svg>
<svg style="left:466.50px;top:560.30px;overflow:visible" width="36.00" height="18.80"><text x="2" y="12.50" font-family="Liberation Sans" font-size="9.4" font-weight="normal" fill="#333" textLength="32.00" lengthAdjust="spacingAndGlyphs">BS 2026</text></svg>
<div class="r" style="left:512.50px;top:559.50px;width:120.00px;height:17.50px;background:#ffffff;"></div>
<svg style="left:515.00px;top:558.80px;overflow:visible" width="115.00" height="18.40"><text x="2" y="12.24" font-family="Liberation Sans" font-size="9.2" font-weight="bold" fill="#1f1f1f" textLength="111.00" lengthAdjust="spacingAndGlyphs">Statements Summary 2026</text></svg>
<div class="r" style="left:517.00px;top:574.50px;width:111.00px;height:1.30px;background:#1e7145;"></div>
<div class="r" style="left:638.75px;top:562.00px;width:61.25px;height:16.00px;background:#fdfdd3;"></div>
<svg style="left:642.50px;top:560.30px;overflow:visible" width="53.25" height="18.80"><text x="2" y="12.50" font-family="Liberation Sans" font-size="9.4" font-weight="normal" fill="#222" textLength="49.25" lengthAdjust="spacingAndGlyphs">CAPEX 2026</text></svg>
<div class="r" style="left:705.00px;top:562.00px;width:55.00px;height:16.00px;background:#fdfdd3;"></div>
<svg style="left:708.50px;top:560.30px;overflow:visible" width="51.00" height="18.80"><text x="2" y="12.50" font-family="Liberation Sans" font-size="9.4" font-weight="normal" fill="#222" textLength="47.00" lengthAdjust="spacingAndGlyphs">OPEX 2026</text></svg>
<div class="r" style="left:767.50px;top:562.00px;width:55.00px;height:16.00px;background:#fdfdd3;"></div>
<svg style="left:771.00px;top:560.30px;overflow:visible" width="48.00" height="18.80"><text x="2" y="12.50" font-family="Liberation Sans" font-size="9.4" font-weight="normal" fill="#222" textLength="44.00" lengthAdjust="spacingAndGlyphs">PAYG 2027</text></svg>
<div class="r" style="left:828.75px;top:562.00px;width:51.25px;height:16.00px;background:#fdfdd3;"></div>
<svg style="left:833.00px;top:560.30px;overflow:visible" width="65.00" height="18.80"><text x="2" y="12.50" font-family="Liberation Sans" font-size="9.4" font-weight="normal" fill="#222" textLength="61.00" lengthAdjust="spacingAndGlyphs">2027 Accounts</text></svg>
<div class="r" style="left:880.00px;top:559.00px;width:120.00px;height:21.00px;background:#e6e6e6;"></div>
<div class="t tc" style="left:790.00px;width:200px;top:564.65px;font-size:9px;line-height:11.70px;color:#333;font-weight:bold;">···</div>
<div class="t tc" style="left:811.00px;width:200px;top:562.20px;font-size:12px;line-height:15.60px;color:#333;font-weight:normal;">+</div>
<div class="t tc" style="left:832.00px;width:200px;top:563.50px;font-size:10px;line-height:13.00px;color:#444;font-weight:bold;">⋮</div>
<svg style="left:945px;top:566px" width="6" height="7" viewBox="0 0 6 7"><path d="M5 0.5 L1 3.5 L5 6.5 Z" fill="#666"/></svg>
<div class="r" style="left:953.50px;top:566.00px;width:12.50px;height:6.00px;background:#777;border-radius:3px"></div>
<svg style="left:980px;top:566px" width="6" height="7" viewBox="0 0 6 7"><path d="M1 0.5 L5 3.5 L1 6.5 Z" fill="#666"/></svg>
<div class="r" style="left:0.00px;top:576.50px;width:1000.00px;height:3.50px;background:#ececec;"></div>
<div class="r" style="left:0.00px;top:580.00px;width:1000.00px;height:12.00px;background:#f3f3f3;"></div>
<svg style="left:5.60px;top:579.60px;overflow:visible" width="22.40" height="15.20"><text x="2" y="10.11" font-family="Liberation Sans" font-size="7.6" font-weight="normal" fill="#444" textLength="18.40" lengthAdjust="spacingAndGlyphs">Ready</text></svg>
<svg style="left:39.5px;top:582.5px" width="10" height="10" viewBox="0 0 10 10"><rect x="0.8" y="0.8" width="8.4" height="8.4" fill="none" stroke="#555" stroke-width="1.1"/><line x1="1" y1="3.3" x2="9" y2="3.3" stroke="#555" stroke-width="0.9"/><line x1="3.5" y1="1" x2="3.5" y2="9" stroke="#555" stroke-width="0.9"/><circle cx="6.3" cy="6.3" r="1.9" fill="#f3f3f3" stroke="#333" stroke-width="1"/><circle cx="6.3" cy="6.3" r="0.8" fill="#333"/></svg>
<svg style="left:59.5px;top:581.5px" width="11" height="11" viewBox="0 0 11 11"><circle cx="5" cy="2" r="1.2" fill="#333"/><path d="M1.5 4 H8.5 M5 4 V7 L3 10 M5 7 L7 10" fill="none" stroke="#333" stroke-width="1"/></svg>
<svg style="left:70.30px;top:580.00px;overflow:visible" width="82.70" height="15.00"><text x="2" y="9.97" font-family="Liberation Sans" font-size="7.5" font-weight="bold" fill="#222" textLength="78.70" lengthAdjust="spacingAndGlyphs">Accessibility: Investigate</text></svg>
<div class="r" style="left:808.00px;top:580.00px;width:22.00px;height:12.00px;background:#e4e4e4;"></div>
<svg style="left:814px;top:581px" width="11" height="10" viewBox="0 0 11 10"><path d="M1 1 H10 V9 H1 Z M1 3.7 H10 M1 6.3 H10 M4 1 V9 M7 1 V9" fill="none" stroke="#444" stroke-width="0.9"/></svg>
<svg style="left:840px;top:581px" width="11" height="10" viewBox="0 0 11 10"><path d="M1 1 H10 V9 H1 Z M3.5 1 V9 M5.5 1 V9 M7.5 1 V9" fill="none" stroke="#444" stroke-width="0.9"/></svg>
<svg style="left:866px;top:581px" width="11" height="10" viewBox="0 0 11 10"><path d="M1 1 H10 V9 H1 Z M1 4 H6 V1" fill="none" stroke="#444" stroke-width="0.9"/></svg>
<div class="r" style="left:888.00px;top:586.80px;width:6.00px;height:1.00px;background:#555;"></div>
<div class="r" style="left:896.00px;top:586.80px;width:69.00px;height:1.00px;background:#888;"></div>
<div class="r" style="left:927.50px;top:583.50px;width:2.50px;height:8.00px;background:#444;"></div>
<div class="t tc" style="left:867.50px;width:200px;top:582.10px;font-size:8px;line-height:10.40px;color:#555;font-weight:normal;">+</div>
<div class="t" style="left:978.50px;top:583.18px;font-size:6.8px;line-height:8.84px;color:#444;font-weight:normal;">100%</div>
</body></html>
